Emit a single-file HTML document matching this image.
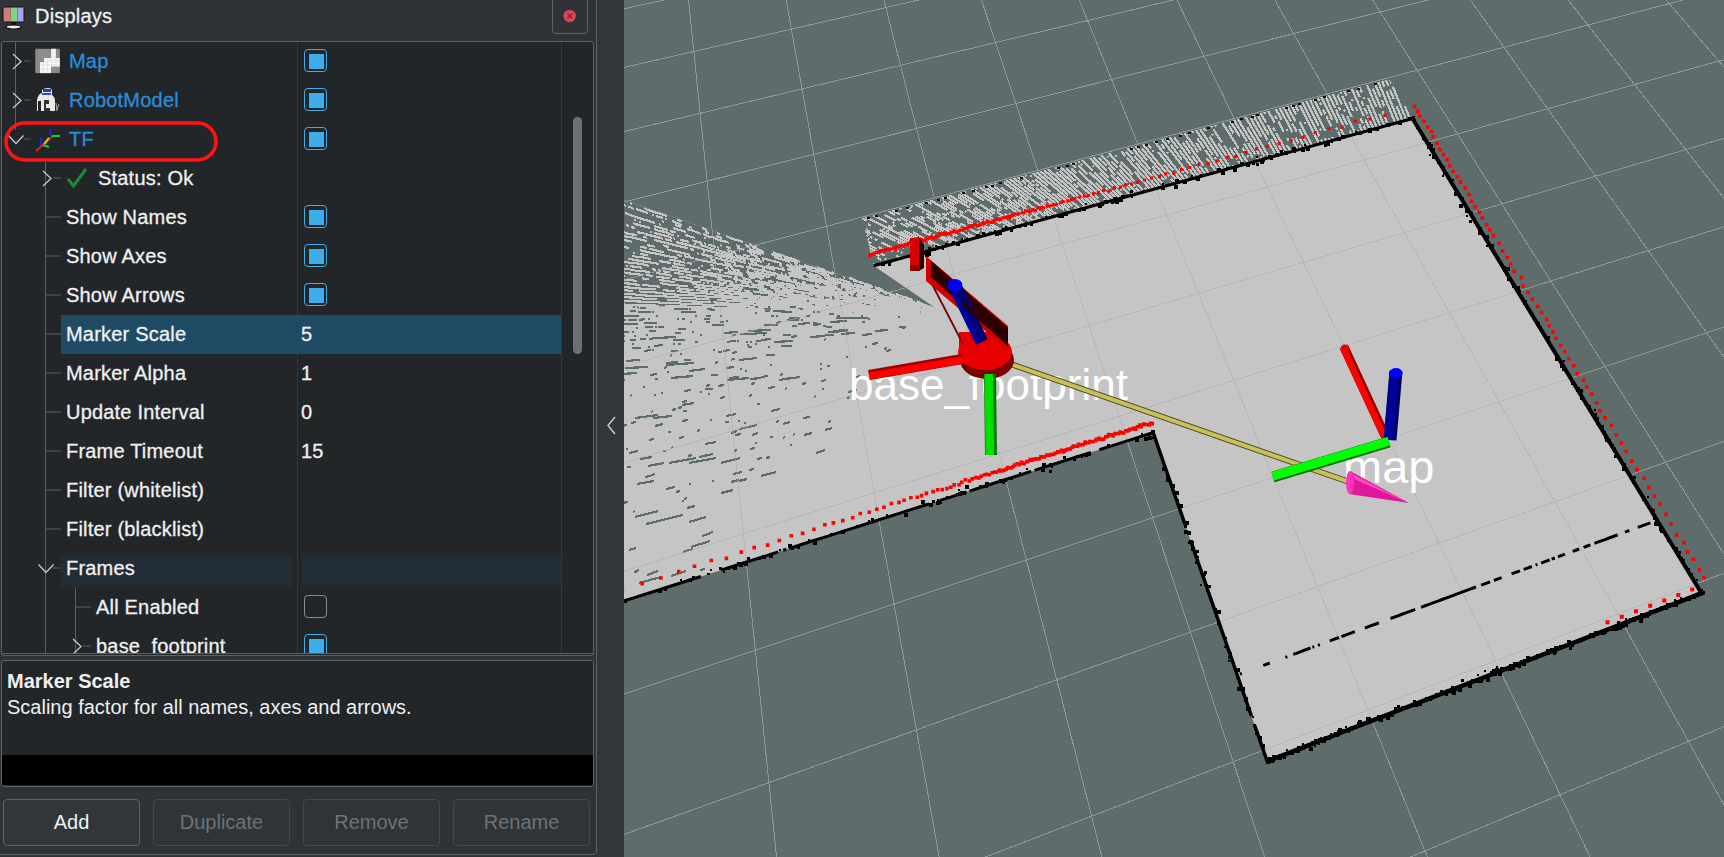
<!DOCTYPE html><html><head><meta charset="utf-8"><style>
html,body{margin:0;padding:0;}
body{width:1724px;height:857px;overflow:hidden;background:#31363b;position:relative;font-family:"Liberation Sans",sans-serif;}
.t{position:absolute;font-size:20px;line-height:39px;color:#eff0f1;white-space:nowrap;letter-spacing:0.2px;-webkit-text-stroke:0.3px currentColor}
#view{position:absolute;left:624px;top:0;width:1100px;height:857px}
</style></head><body>
<div style="position:absolute;left:0;top:0;width:596px;height:857px;background:#2f3338"></div>
<div style="position:absolute;left:1px;top:41px;width:591px;height:613px;background:#232629;border:1px solid #5f6367;border-radius:3px"></div>
<div style="position:absolute;left:297px;top:42px;width:1px;height:612px;background:#33383c"></div>
<div style="position:absolute;left:561px;top:42px;width:1px;height:612px;background:#33383c"></div>
<div style="position:absolute;left:573px;top:117px;width:9px;height:237px;background:#6e6f70;border-radius:5px"></div>
<div style="position:absolute;left:552px;top:-5px;width:34px;height:37px;border:1px solid #5f6367;border-radius:4px"></div>
<svg style="position:absolute;left:560px;top:6px" width="20" height="20"><circle cx="9.7" cy="10" r="6.2" fill="#da4453"/><path d="M7.3,7.6L12.1,12.4M12.1,7.6L7.3,12.4" stroke="#5a3038" stroke-width="1.1"/></svg>

<div style="position:absolute;left:0;top:0;width:596px;height:654px;overflow:hidden">
<svg style="position:absolute;left:0;top:0" width="596" height="857"><line x1="15.5" y1="42" x2="15.5" y2="130" stroke="#5c6064" stroke-width="1"/><line x1="45.5" y1="160" x2="45.5" y2="654" stroke="#5c6064" stroke-width="1"/><line x1="75.5" y1="588" x2="75.5" y2="654" stroke="#5c6064" stroke-width="1"/><line x1="24" y1="61.0" x2="31" y2="61.0" stroke="#5c6064" stroke-width="1"/><path d="M13,54.0 L21,61.5 L13,69.0" fill="none" stroke="#c8c9ca" stroke-width="1.3"/><line x1="24" y1="100.0" x2="31" y2="100.0" stroke="#5c6064" stroke-width="1"/><path d="M13,93.0 L21,100.5 L13,108.0" fill="none" stroke="#c8c9ca" stroke-width="1.3"/><line x1="24" y1="139.0" x2="31" y2="139.0" stroke="#5c6064" stroke-width="1"/><path d="M8.5,135.5 L16,143.5 L23.5,135.5" fill="none" stroke="#c8c9ca" stroke-width="1.3"/><line x1="53" y1="178.0" x2="61" y2="178.0" stroke="#5c6064" stroke-width="1"/><path d="M43,171.0 L51,178.5 L43,186.0" fill="none" stroke="#c8c9ca" stroke-width="1.3"/><line x1="45" y1="217.0" x2="61" y2="217.0" stroke="#5c6064" stroke-width="1"/><line x1="45" y1="256.0" x2="61" y2="256.0" stroke="#5c6064" stroke-width="1"/><line x1="45" y1="295.0" x2="61" y2="295.0" stroke="#5c6064" stroke-width="1"/><line x1="45" y1="334.0" x2="61" y2="334.0" stroke="#5c6064" stroke-width="1"/><line x1="45" y1="373.0" x2="61" y2="373.0" stroke="#5c6064" stroke-width="1"/><line x1="45" y1="412.0" x2="61" y2="412.0" stroke="#5c6064" stroke-width="1"/><line x1="45" y1="451.0" x2="61" y2="451.0" stroke="#5c6064" stroke-width="1"/><line x1="45" y1="490.0" x2="61" y2="490.0" stroke="#5c6064" stroke-width="1"/><line x1="45" y1="529.0" x2="61" y2="529.0" stroke="#5c6064" stroke-width="1"/><line x1="53" y1="568.0" x2="61" y2="568.0" stroke="#5c6064" stroke-width="1"/><path d="M38.5,564.5 L46,572.5 L53.5,564.5" fill="none" stroke="#c8c9ca" stroke-width="1.3"/><line x1="75" y1="607.0" x2="91" y2="607.0" stroke="#5c6064" stroke-width="1"/><line x1="83" y1="646.0" x2="91" y2="646.0" stroke="#5c6064" stroke-width="1"/><path d="M73,639.0 L81,646.5 L73,654.0" fill="none" stroke="#c8c9ca" stroke-width="1.3"/><rect x="2.5" y="6.5" width="22" height="16" rx="2" fill="#111" /><rect x="3.5" y="7.5" width="7" height="14" fill="#d37a7a"/><rect x="10.5" y="7.5" width="7" height="14" fill="#86cf86"/><rect x="17.5" y="7.5" width="6" height="14" fill="#a7a3ee"/><rect x="11" y="22" width="5" height="3" fill="#111"/><ellipse cx="13.5" cy="27" rx="7.5" ry="2" fill="#e8e8e8" stroke="#111" stroke-width="1.2"/><rect x="35.3" y="48.8" width="24.5" height="24.3" fill="#8a8a8a"/><rect x="51" y="48.8" width="5" height="9.5" fill="#f6f6f6"/><rect x="44.1" y="58" width="15.7" height="8.6" fill="#f6f6f6"/><rect x="40" y="62.2" width="11" height="10.9" fill="#f6f6f6"/><path d="M39.4,48.8v24.3M43.5,48.8v24.3M47.5,48.8v24.3M51.6,48.8v24.3M55.7,48.8v24.3M35.3,52.8h24.5M35.3,56.9h24.5M35.3,60.9h24.5M35.3,65.0h24.5M35.3,69.0h24.5" stroke="#a0a0a0" stroke-width="0.6" opacity="0.35"/><path d="M37,111 L37,100 Q38,94 42,93 L42,90 Q44,88 48,88 Q52,88 52,91 L52,95 Q55,97 55,101 L55,111 Z" fill="#e9e9e9"/><rect x="43" y="89" width="8" height="3" fill="#2a3ad0"/><rect x="42" y="93" width="9" height="2" fill="#3347c8"/><path d="M38,101 L41,101 L41,111 L38,111 Z" fill="#222"/><path d="M44,100 L49,100 L49,104 L46,104 L46,108 L50,108 L50,111 L44,111 Z" fill="#333"/><path d="M56,103 L57,111 M59,104 L57,110" stroke="#aaa" stroke-width="1"/><line x1="36" y1="151" x2="53" y2="136" stroke="#e02020" stroke-width="2"/><line x1="44" y1="144" x2="49" y2="138" stroke="#d0c020" stroke-width="2"/><line x1="52" y1="136" x2="60" y2="136" stroke="#20d020" stroke-width="2"/><line x1="43" y1="145" x2="49" y2="147" stroke="#20d020" stroke-width="2"/><line x1="50" y1="129" x2="51" y2="136" stroke="#2020e0" stroke-width="2"/><line x1="41" y1="137" x2="41" y2="145" stroke="#2020e0" stroke-width="2"/><path d="M68,179 L73.5,186 L86,169" fill="none" stroke="#1f8a35" stroke-width="3"/><rect x="6" y="123" width="210" height="37" rx="18.5" fill="none" stroke="#ff1414" stroke-width="3.5"/></svg>
<div class="t" style="left:69px;top:42px;color:#2d8cd9">Map</div><div style="position:absolute;left:304px;top:49px;width:21px;height:21px;border:1.5px solid #3daee9;border-radius:4px"></div><div style="position:absolute;left:309px;top:54px;width:15px;height:15px;background:#3daee9"></div><div class="t" style="left:69px;top:81px;color:#2d8cd9">RobotModel</div><div style="position:absolute;left:304px;top:88px;width:21px;height:21px;border:1.5px solid #3daee9;border-radius:4px"></div><div style="position:absolute;left:309px;top:93px;width:15px;height:15px;background:#3daee9"></div><div class="t" style="left:69px;top:120px;color:#2d8cd9">TF</div><div style="position:absolute;left:304px;top:127px;width:21px;height:21px;border:1.5px solid #3daee9;border-radius:4px"></div><div style="position:absolute;left:309px;top:132px;width:15px;height:15px;background:#3daee9"></div><div class="t" style="left:98px;top:159px;color:#eff0f1">Status: Ok</div><div class="t" style="left:66px;top:198px;color:#eff0f1">Show Names</div><div style="position:absolute;left:304px;top:205px;width:21px;height:21px;border:1.5px solid #3daee9;border-radius:4px"></div><div style="position:absolute;left:309px;top:210px;width:15px;height:15px;background:#3daee9"></div><div class="t" style="left:66px;top:237px;color:#eff0f1">Show Axes</div><div style="position:absolute;left:304px;top:244px;width:21px;height:21px;border:1.5px solid #3daee9;border-radius:4px"></div><div style="position:absolute;left:309px;top:249px;width:15px;height:15px;background:#3daee9"></div><div class="t" style="left:66px;top:276px;color:#eff0f1">Show Arrows</div><div style="position:absolute;left:304px;top:283px;width:21px;height:21px;border:1.5px solid #3daee9;border-radius:4px"></div><div style="position:absolute;left:309px;top:288px;width:15px;height:15px;background:#3daee9"></div><div style="position:absolute;left:61px;top:315px;width:500px;height:39px;background:#1f4c64"></div><div class="t" style="left:66px;top:315px;color:#eff0f1">Marker Scale</div><div class="t" style="left:301px;top:315px">5</div><div class="t" style="left:66px;top:354px;color:#eff0f1">Marker Alpha</div><div class="t" style="left:301px;top:354px">1</div><div class="t" style="left:66px;top:393px;color:#eff0f1">Update Interval</div><div class="t" style="left:301px;top:393px">0</div><div class="t" style="left:66px;top:432px;color:#eff0f1">Frame Timeout</div><div class="t" style="left:301px;top:432px">15</div><div class="t" style="left:66px;top:471px;color:#eff0f1">Filter (whitelist)</div><div class="t" style="left:66px;top:510px;color:#eff0f1">Filter (blacklist)</div><div style="position:absolute;left:61px;top:555px;width:231px;height:32px;background:#232d35"></div><div style="position:absolute;left:302px;top:555px;width:259px;height:32px;background:#232d35"></div><div class="t" style="left:66px;top:549px;color:#eff0f1">Frames</div><div class="t" style="left:96px;top:588px;color:#eff0f1">All Enabled</div><div style="position:absolute;left:304px;top:595px;width:21px;height:21px;border:1.5px solid #8a8d90;border-radius:4px"></div><div class="t" style="left:96px;top:627px;color:#eff0f1">base_footprint</div><div style="position:absolute;left:304px;top:634px;width:21px;height:21px;border:1.5px solid #3daee9;border-radius:4px"></div><div style="position:absolute;left:309px;top:639px;width:15px;height:15px;background:#3daee9"></div></div><div class="t" style="left:35px;top:-3px;font-size:20px">Displays</div>
<div style="position:absolute;left:1px;top:660px;width:591px;height:125px;background:#232629;border:1px solid #5f6367;border-radius:3px;overflow:hidden">
<div style="position:absolute;left:0;top:94px;width:591px;height:30px;background:#000"></div>
</div>
<div style="position:absolute;left:7px;top:662px;font-size:20px;line-height:39px;color:#eff0f1;font-weight:bold">Marker Scale</div>
<div style="position:absolute;left:7px;top:688px;font-size:20px;line-height:39px;color:#eff0f1">Scaling factor for all names, axes and arrows.</div>
<div style="position:absolute;left:3px;top:799px;width:135px;height:45px;border:1px solid #5f6367;border-radius:4px;background:#31363b;color:#eff0f1;font-size:20px;line-height:45px;text-align:center">Add</div>
<div style="position:absolute;left:153px;top:799px;width:135px;height:45px;border:1px solid #45494d;border-radius:4px;background:#2f3438;color:#6e7276;font-size:20px;line-height:45px;text-align:center">Duplicate</div>
<div style="position:absolute;left:303px;top:799px;width:135px;height:45px;border:1px solid #45494d;border-radius:4px;background:#2f3438;color:#6e7276;font-size:20px;line-height:45px;text-align:center">Remove</div>
<div style="position:absolute;left:453px;top:799px;width:135px;height:45px;border:1px solid #45494d;border-radius:4px;background:#2f3438;color:#6e7276;font-size:20px;line-height:45px;text-align:center">Rename</div>
<div style="position:absolute;left:-6px;top:-6px;width:603px;height:861px;border:1px solid #5f6367;border-radius:4px;box-sizing:border-box"></div>
<div style="position:absolute;left:1px;top:653px;width:592px;height:1px;background:#5f6367"></div>
<div style="position:absolute;left:597px;top:0;width:27px;height:857px;background:#31363b"></div>
<svg style="position:absolute;left:596px;top:0" width="28" height="857"><path d="M19,417 L12,425.5 L19,434" fill="none" stroke="#c8c9ca" stroke-width="1.5"/></svg>
<svg id="view" width="1100" height="857" viewBox="0 0 1100 857"><rect x="0" y="0" width="1100" height="857" fill="#5e6d6c"/><path d="M-205.3,-184.6L-754.2,4219.7M-120.9,-199.8L-319.5,3862.9M-38.9,-214.6L62.4,3549.4M41.0,-229.0L400.6,3271.8M118.8,-243.0L702.1,3024.3M194.6,-256.7L972.7,2802.2M268.4,-270.0L1216.8,2601.8M340.4,-283.0L1438.2,2420.1M410.5,-295.6L1639.8,2254.6M479.0,-308.0L1824.3,2103.2M545.8,-320.0L1993.7,1964.2M610.9,-331.8L2149.7,1836.1M674.5,-343.2L2294.0,1717.6M736.7,-354.4L2427.8,1607.8M797.4,-365.4L2552.2,1505.7M856.7,-376.1L2668.1,1410.6M914.6,-386.5L2776.4,1321.7M-472.9,-136.3L914.6,-386.5M-488.9,-90.9L944.7,-358.9M-506.1,-41.8L976.8,-329.5M-524.9,11.5L1010.9,-298.2M-545.3,69.6L1047.3,-264.8M-567.7,133.1L1086.3,-229.0M-592.2,202.9L1128.1,-190.6M-619.3,279.9L1173.0,-149.4M-649.3,365.2L1221.5,-105.0M-682.8,460.4L1273.9,-56.9M-720.4,567.2L1330.7,-4.7M-762.9,687.9L1392.6,52.0M-811.3,825.4L1460.2,114.0M-866.9,983.5L1534.3,182.0M-931.5,1167.2L1616.0,257.0M-1007.5,1383.2L1706.5,340.0M-1098.1,1640.8L1807.2,432.5M-1208.1,1953.4L1920.1,536.1M-1344.4,2340.8L2047.5,652.9M-1517.7,2833.3L2192.3,785.8M-1745.4,3480.4L2358.4,938.1M-2057.9,4368.8L2550.8,1114.7" stroke="#8e9a9a" stroke-width="1" fill="none" shape-rendering="crispEdges"/><polygon points="-315.7,701.4 -257.7,236.5 0.0,200.0 310.0,307.0 249.7,265.8 788.5,118.5 1077.5,593.2 643.1,761.2 529.1,432.6" fill="#c5c5c5"/><clipPath id="mc"><polygon points="-315.7,701.4 -257.7,236.5 0.0,200.0 310.0,307.0 249.7,265.8 788.5,118.5 1077.5,593.2 643.1,761.2 529.1,432.6"/></clipPath><polygon points="298.2,302.9 0.0,200.0 0.0,305.1 296.0,314.7" fill="#5e6d6c"/><path d="M295,302L293,301M289,300L286,299M286,299L284,298M284,298L280,297M280,297L272,294M259,290L257,289M257,289L253,288M253,288L251,287M248,286L246,285M246,285L241,284M241,284L239,283M239,283L235,282M235,282L229,279M229,279L225,278M210,273L208,272M201,270L199,269M199,269L197,269M197,269L193,267M176,262L172,260M172,260L162,257M162,257L158,255M158,255L153,254M153,254L149,252M133,247L130,246M128,245L125,244M119,242L106,238M106,238L102,236M96,234L95,234M95,234L93,233M83,230L78,228M58,221L53,220M43,216L24,210M24,210L22,209M22,209L20,208M8,204L6,203M298,303L293,302M288,300L281,298M275,296L273,295M258,290L253,289M253,289L251,288M249,287L247,287M247,287L241,285M233,282L231,281M231,281L229,281M221,278L219,277M209,274L193,269M193,269L183,266M183,266L181,265M181,265L180,265M174,263L172,262M172,262L160,258M158,257L155,256M155,256L147,254M140,252L136,250M136,250L128,247M126,247L121,245M98,238L92,236M85,233L81,232M68,228L66,227M66,227L65,227M58,225L48,221M43,219L41,219M39,218L32,216M30,215L28,215M24,213L12,209M10,209L8,208M8,208L6,207M6,207L4,207M2,206L0,205M272,296L269,295M269,295L267,294M267,294L258,291M258,291L252,289M242,286L240,286M203,274L196,271M196,271L191,270M188,269L177,266M177,266L175,265M173,264L170,263M166,262L150,257M140,254L138,253M138,253L125,249M116,246L114,246M114,246L112,245M105,243L103,242M103,242L95,240M95,240L88,237M88,237L86,237M86,237L79,234M77,234L75,233M75,233L67,230M67,230L63,229M57,227L51,225M40,222L38,221M298,304L296,304M296,304L294,303M294,303L292,303M274,297L271,296M271,296L268,295M268,295L265,294M263,294L260,293M246,289L240,287M240,287L230,284M227,283L221,281M221,281L215,279M206,276L203,275M203,275L201,275M201,275L197,274M197,274L193,272M193,272L182,269M178,268L172,266M172,266L171,265M168,265L166,264M137,255L135,254M135,254L128,252M128,252L123,251M120,250L118,249M118,249L113,248M82,238L80,238M62,232L52,229M52,229L49,228M37,225L35,224M31,223L15,218M15,218L9,216M9,216L1,213M298,305L289,302M289,302L281,300M281,300L269,296M269,296L265,295M256,292L254,292M252,291L249,290M249,290L240,288M240,288L238,287M238,287L230,285M228,284L226,284M226,284L224,283M215,280L207,278M207,278L205,278M205,278L203,277M177,269L172,268M172,268L170,267M170,267L162,265M158,264L156,263M156,263L154,262M154,262L148,261M148,261L146,260M146,260L141,259M141,259L138,258M134,257L132,256M132,256L126,254M116,251L115,251M107,248L102,247M98,246L96,245M71,238L69,237M69,237L67,237M67,237L65,236M65,236L61,235M52,232L50,232M50,232L46,231M44,230L30,226M17,222L15,222M12,220L10,220M298,305L290,303M290,303L288,302M288,302L278,300M278,300L276,299M276,299L268,297M254,293L251,292M251,292L247,291M247,291L244,290M244,290L242,289M242,289L239,289M239,289L237,288M235,287L222,284M222,284L220,283M220,283L218,283M218,283L205,279M205,279L200,277M197,277L192,275M192,275L190,275M190,275L185,273M182,272L179,272M179,272L169,269M169,269L167,268M167,268L165,268M158,266L155,265M140,261L138,260M136,259L131,258M126,256L123,256M123,256L121,255M121,255L119,255M112,253L103,250M95,248L93,247M92,247L86,245M86,245L84,245M82,244L80,243M78,243L70,241M70,241L68,240M55,236L53,236M50,235L48,235M48,235L46,234M46,234L41,232M41,232L37,231M37,231L35,231M35,231L33,230M33,230L30,229M26,228L15,225M15,225L11,224M11,224L9,223M0,221L0,221M297,306L289,303M287,303L285,302M278,300L273,299M273,299L268,298M236,289L234,288M225,286L222,285M222,285L220,284M220,284L216,283M216,283L214,283M209,282L206,281M206,281L203,280M198,279L197,278M197,278L195,278M193,277L177,273M177,273L172,271M172,271L169,271M169,271L167,270M167,270L163,269M160,268L158,268M146,264L144,264M138,262L135,261M135,261L133,261M133,261L131,260M131,260L127,259M127,259L125,259M125,259L111,255M109,254L107,254M107,254L96,251M96,251L94,250M94,250L92,250M90,249L88,249M88,249L80,246M80,246L76,245M72,244L70,244M65,242L62,241M62,241L56,240M51,239L49,238M48,238L43,236M43,236L30,233M28,232L26,232M11,228L7,227M5,226L2,225M0,225L0,225M297,306L293,305M287,303L281,302M281,302L279,301M279,301L272,299M272,299L262,297M260,296L259,296M259,296L257,295M257,295L252,294M252,294L250,294M250,294L245,292M245,292L243,292M243,292L233,289M233,289L231,289M231,289L218,285M214,284L210,283M210,283L205,282M205,282L194,279M194,279L183,276M179,275L174,274M174,274L172,273M172,273L167,272M161,270L152,268M152,268L142,266M133,263L131,263M131,263L129,262M129,262L126,261M122,260L113,258M113,258L112,258M112,258L110,257M110,257L102,255M102,255L96,254M96,254L95,253M95,253L85,251M85,251L78,249M78,249L76,248M76,248L52,242M48,241L41,239M39,239L37,238M37,238L21,234M21,234L19,233M19,233L17,233M17,233L13,232M297,306L295,306M295,306L288,304M288,304L285,303M283,303L278,301M278,301L275,301M275,301L273,300M273,300L268,299M264,298L260,297M257,296L254,296M252,295L250,295M250,295L241,292M241,292L235,291M235,291L233,290M233,290L230,290M228,289L223,288M223,288L217,286M211,285L209,284M207,284L205,283M205,283L190,280M190,280L188,279M188,279L185,278M179,277L177,276M177,276L168,274M168,274L164,273M151,270L137,266M137,266L126,264M126,264L124,263M122,263L101,257M101,257L99,257M99,257L95,256M95,256L93,255M93,255L91,255M81,252L79,252M70,250L66,249M64,248L58,247M58,247L35,241M35,241L30,240M23,238L21,237M21,237L19,237M13,235L5,234M5,234L1,233M1,233L0,232M297,307L293,306M289,305L282,303M282,303L279,302M279,302L269,300M269,300L265,299M265,299L258,297M258,297L256,297M256,297L251,296M251,296L243,294M241,293L231,291M231,291L229,291M229,291L227,290M225,290L221,289M219,288L217,288M213,287L210,286M210,286L204,285M204,285L199,283M197,283L191,281M191,281L189,281M189,281L187,281M187,281L185,280M185,280L177,278M177,278L165,275M163,275L161,274M159,274L157,273M141,269L138,269M127,266L125,266M112,263L106,261M106,261L95,259M95,259L93,258M93,258L91,258M89,257L77,254M75,254L73,253M45,247L41,246M41,246L39,245M23,241L6,237M6,237L3,237M3,237L0,236M297,307L295,307M286,305L278,303M278,303L276,302M276,302L274,302M274,302L267,300M267,300L264,300M264,300L258,298M258,298L256,298M256,298L251,297M251,297L249,296M249,296L246,295M246,295L244,295M244,295L236,293M236,293L234,293M232,292L230,292M230,292L228,292M228,292L226,291M215,289L213,288M213,288L208,287M193,283L191,283M166,277L163,277M163,277L161,276M161,276L155,275M155,275L153,274M153,274L149,273M149,273L122,267M120,267L109,265M107,264L105,264M105,264L100,262M92,261L86,259M66,255L55,252M55,252L49,251M49,251L47,250M47,250L45,250M45,250L43,249M31,247L29,246M29,246L27,246M27,246L23,245M8,242L6,241M6,241L4,241M4,241L1,240M1,240L0,240M293,307L285,305M285,305L282,304M282,304L280,304M280,304L278,303M278,303L258,299M258,299L256,299M256,299L254,298M254,298L249,297M249,297L247,297M247,297L243,296M243,296L241,295M239,295L236,294M236,294L233,294M228,293L226,292M226,292L224,292M224,292L222,291M218,290L203,287M203,287L200,287M200,287L198,286M196,286L194,285M194,285L191,285M182,283L180,282M180,282L178,282M173,281L169,280M167,280L155,277M155,277L153,276M151,276L149,275M149,275L147,275M147,275L132,272M132,272L130,271M125,270L123,270M109,267L105,266M105,266L96,264M96,264L94,264M94,264L92,263M92,263L90,263M90,263L88,262M88,262L86,262M86,262L71,259M70,258L63,257M63,257L60,256M58,256L53,255M40,252L38,252M38,252L27,249M27,249L25,249M23,248L18,247M18,247L16,247M297,308L295,308M293,307L291,307M291,307L289,306M289,306L287,306M284,305L281,305M281,305L273,303M273,303L271,303M271,303L267,302M267,302L264,301M264,301L259,300M259,300L250,298M250,298L245,297M245,297L243,297M243,297L241,297M239,296L237,296M237,296L232,295M230,294L223,293M223,293L221,292M221,292L217,292M217,292L215,291M215,291L213,291M211,290L209,290M209,290L200,288M200,288L195,287M195,287L193,287M193,287L191,286M191,286L178,284M178,284L152,278M146,277L139,276M139,276L136,275M136,275L132,274M132,274L126,273M126,273L122,272M116,271L112,270M112,270L107,269M105,269L103,268M103,268L101,268M90,266L88,265M88,265L86,265M61,260L59,259M54,258L48,257M48,257L29,253M29,253L27,253M27,253L16,250M5,248L0,247M0,247L0,247M297,308L294,308M294,308L291,307M291,307L289,307M289,307L279,305M279,305L277,304M277,304L275,304M275,304L268,303M268,303L266,302M266,302L258,301M258,301L256,300M247,299L244,298M244,298L241,298M239,297L237,297M237,297L234,296M229,295L227,295M221,294L219,293M217,293L215,292M215,292L211,292M211,292L197,289M197,289L194,288M190,288L177,285M174,285L171,284M140,278L138,278M138,278L126,275M126,275L124,275M119,274L116,273M116,273L114,273M114,273L104,271M99,270L97,270M97,270L87,268M79,266L77,266M68,264L65,263M65,263L63,263M61,263L59,262M59,262L53,261M53,261L49,260M49,260L45,260M24,255L21,255M21,255L18,254M18,254L16,254M11,253L9,253M297,309L293,308M289,307L286,307M286,307L281,306M281,306L277,305M277,305L272,304M272,304L269,304M269,304L267,303M265,303L260,302M260,302L254,301M252,301L247,300M247,300L233,297M224,295L207,292M207,292L202,291M202,291L200,291M200,291L198,291M198,291L178,287M178,287L173,286M171,286L169,285M169,285L163,284M163,284L155,283M155,283L152,282M150,282L144,281M138,280L136,279M131,278L128,278M128,278L125,277M119,276L109,274M109,274L102,273M102,273L100,273M97,272L95,272M87,270L85,270M85,270L83,270M76,268L74,268M61,266L59,265M59,265L52,264M52,264L49,263M47,263L35,261M27,259L22,258M22,258L17,257M17,257L12,257M12,257L10,256M10,256L8,256M284,307L280,306M280,306L271,305M271,305L257,302M257,302L252,301M250,301L248,301M248,301L246,300M246,300L240,299M240,299L235,299M235,299L230,298M230,298L228,297M228,297L221,296M221,296L219,296M217,295L212,295M212,295L206,294M206,294L204,293M204,293L202,293M202,293L197,292M197,292L193,291M193,291L183,290M183,290L162,286M160,286L157,285M157,285L155,285M155,285L152,284M152,284L150,284M146,283L144,283M144,283L133,281M133,281L131,281M127,280L122,279M122,279L118,278M114,278L110,277M108,277L101,276M101,276L92,274M92,274L85,273M85,273L76,271M74,271L72,270M72,270L67,270M65,269L63,269M63,269L61,269M61,269L59,268M59,268L57,268M57,268L55,268M55,268L52,267M52,267L48,266M35,264L24,262M24,262L22,262M22,262L6,259M6,259L4,259M297,310L295,309M295,309L288,308M288,308L284,308M284,308L282,307M282,307L278,307M278,307L274,306M270,305L267,305M267,305L257,303M257,303L255,303M255,303L253,303M253,303L251,302M251,302L249,302M249,302L243,301M243,301L241,301M241,301L238,300M238,300L220,297M220,297L216,297M216,297L211,296M211,296L209,295M209,295L207,295M207,295L205,295M205,295L203,294M203,294L199,294M199,294L197,293M197,293L185,292M170,289L166,289M164,288L156,287M156,287L153,286M153,286L147,285M147,285L139,284M139,284L136,284M136,284L134,283M128,282L124,282M124,282L109,279M98,278L90,276M90,276L84,275M84,275L76,274M68,273L66,272M66,272L64,272M64,272L60,271M60,271L58,271M58,271L43,269M43,269L40,268M40,268L38,268M25,266L18,264M18,264L0,262M296,310L294,310M277,307L275,307M266,305L264,305M264,305L256,304M256,304L253,303M253,303L250,303M250,303L248,303M248,303L232,300M232,300L225,299M225,299L218,298M218,298L215,298M215,298L210,297M208,297L200,295M200,295L198,295M198,295L188,294M188,294L170,291M170,291L165,290M165,290L162,290M162,290L160,289M160,289L158,289M156,289L154,289M154,289L146,287M140,286L138,286M138,286L131,285M131,285L127,284M125,284L121,283M121,283L119,283M119,283L117,283M113,282L111,282M109,282L98,280M98,280L93,279M80,277L75,277M75,277L73,276M73,276L69,276M69,276L64,275M64,275L62,275M60,274L50,273M46,272L42,272M42,272L39,271M37,271L34,270M32,270L28,269M18,268L15,267M15,267L12,267M12,267L6,266M4,266L2,266M296,310L286,309M280,308L258,305M258,305L256,305M256,305L254,304M254,304L247,304M247,304L245,303M245,303L243,303M243,303L241,303M241,303L239,302M239,302L230,301M230,301L228,301M228,301L224,300M224,300L221,300M221,300L219,300M215,299L213,299M213,299L211,298M208,298L205,298M200,297L198,297M198,297L195,296M195,296L193,296M193,296L191,296M189,295L186,295M181,294L177,294M169,293L160,291M160,291L156,291M156,291L152,290M152,290L150,290M143,289L141,289M141,289L138,288M138,288L136,288M136,288L134,288M134,288L132,287M132,287L129,287M129,287L114,285M114,285L105,284M103,283L98,283M98,283L87,281M87,281L78,280M78,280L76,280M69,279L60,277M60,277L55,277M48,276L45,275M45,275L32,273M26,272L17,271M17,271L12,271M12,271L10,270M10,270L7,270M7,270L5,269M5,269L2,269M2,269L0,269M296,311L268,307M237,303L233,303M233,303L230,302M230,302L228,302M228,302L221,301M221,301L219,301M219,301L217,301M217,301L215,300M215,300L212,300M212,300L210,300M204,299L202,299M200,298L193,298M186,297L184,296M184,296L171,295M171,295L168,294M168,294L151,292M149,292L137,290M137,290L135,290M119,288L112,287M112,287L110,287M110,287L108,286M108,286L104,286M104,286L102,286M100,285L98,285M98,285L95,285M89,284L87,284M85,283L83,283M81,283L79,283M77,282L74,282M74,282L71,282M71,282L48,279M46,278L41,278M41,278L37,277M37,277L32,277M29,276L22,275M19,275L2,273M2,273L0,272M296,311L294,311M294,311L292,311M292,311L285,310M285,310L283,310M283,310L281,309M281,309L279,309M279,309L271,308M271,308L262,307M262,307L252,306M242,305L240,305M240,305L234,304M228,303L223,303M223,303L221,302M217,302L215,302M215,302L213,301M213,301L203,300M203,300L201,300M201,300L199,300M199,300L187,298M187,298L185,298M185,298L183,298M183,298L180,297M180,297L173,297M173,297L171,296M171,296L168,296M168,296L166,296M166,296L164,296M164,296L156,295M156,295L148,294M148,294L146,293M146,293L141,293M141,293L139,293M139,293L135,292M135,292L133,292M133,292L131,292M131,292L129,291M126,291L122,291M122,291L120,290M118,290L115,290M115,290L113,289M113,289L111,289M111,289L109,289M109,289L105,289M105,289L103,288M103,288L100,288M100,288L98,288M98,288L93,287M93,287L90,287M90,287L87,286M87,286L85,286M85,286L83,286M83,286L75,285M75,285L70,284M70,284L68,284M51,282L49,282M49,282L47,282M47,282L45,281M45,281L43,281M43,281L35,280M25,279L23,279M23,279L21,279M21,279L18,278M1,276L0,276M294,311L292,311M292,311L288,311M288,311L286,311M286,311L284,310M284,310L280,310M280,310L278,310M278,310L274,309M274,309L272,309M272,309L268,309M268,309L253,307M253,307L247,306M247,306L234,305M234,305L227,304M227,304L225,304M225,304L223,304M223,304L216,303M216,303L214,303M214,303L209,302M209,302L199,301M199,301L197,301M197,301L193,300M193,300L169,298M169,298L167,298M167,298L163,297M155,296L146,295M146,295L144,295M129,294L127,293M127,293L125,293M125,293L123,293M123,293L121,293M121,293L111,292M111,292L109,291M109,291L106,291M106,291L87,289M87,289L83,289M83,289L79,288M79,288L77,288M77,288L73,287M73,287L70,287M64,286L61,286M61,286L56,286M56,286L53,285M53,285L47,285M47,285L36,283M13,281L6,280M6,280L1,280M1,280L0,280M296,312L294,312M294,312L291,312M291,312L289,311M289,311L282,311M282,311L275,310M275,310L272,310M272,310L270,310M270,310L268,309M268,309L264,309M264,309L261,309M261,309L257,308M257,308L255,308M255,308L252,308M252,308L250,308M250,308L247,307M247,307L245,307M245,307L238,306M238,306L224,305M224,305L214,304M214,304L212,304M212,304L196,302M196,302L185,301M183,301L180,301M180,301L177,300M177,300L175,300M175,300L163,299M163,299L153,298M153,298L151,298M151,298L150,298M150,298L147,297M147,297L139,297M139,297L134,296M134,296L119,295M119,295L113,294M113,294L108,294M108,294L104,293M104,293L102,293M102,293L88,292M88,292L86,292M84,291L79,291M79,291L77,291M77,291L75,290M75,290L72,290M70,290L57,289M57,289L54,288M54,288L52,288M36,287L32,286M32,286L27,286M27,286L22,285M22,285L20,285M20,285L18,285M16,285L0,283M296,313L293,312M293,312L290,312M290,312L276,311M276,311L271,310M271,310L269,310M269,310L263,310M263,310L258,309M258,309L256,309M256,309L254,309M254,309L250,309M250,309L248,308M248,308L246,308M246,308L244,308M244,308L237,307M237,307L221,306M216,306L209,305M209,305L202,304M202,304L199,304M199,304L189,303M189,303L187,303M187,303L163,301M163,301L161,301M161,301L158,301M158,301L151,300M151,300L148,300M148,300L146,299M146,299L141,299M141,299L139,299M139,299L137,299M137,299L132,298M132,298L128,298M128,298L122,297M122,297L112,297M112,297L95,295M95,295L91,295M91,295L89,294M89,294L77,293M77,293L75,293M75,293L72,293M72,293L69,293M69,293L53,291M51,291L45,291M45,291L41,290M41,290L39,290M32,289L25,289M25,289L23,289M23,289L21,289M21,289L0,287M296,313L286,312M286,312L281,312M279,312L275,311M275,311L273,311M273,311L268,311M268,311L261,310M261,310L257,310M257,310L255,310M253,310L251,310M251,310L249,309M249,309L245,309M245,309L238,309M238,309L224,307M224,307L217,307M217,307L215,307M215,307L213,307M213,307L211,306M211,306L209,306M209,306L207,306M207,306L204,306M202,306L198,305M198,305L191,305M188,305L186,304M186,304L177,304M177,304L171,303M171,303L169,303M169,303L167,303M167,303L162,303M162,303L160,303M160,303L158,302M158,302L155,302M155,302L151,302M151,302L143,301M143,301L135,301M135,301L129,300M129,300L127,300M127,300L122,300M122,300L114,299M114,299L111,299M111,299L107,298M107,298L105,298M105,298L92,297M92,297L90,297M90,297L88,297M88,297L86,297M86,297L78,296M78,296L76,296M76,296L74,296M74,296L67,295M67,295L65,295M65,295L57,295M57,295L45,294M45,294L43,294M43,294L36,293M36,293L28,292M28,292L17,292M17,292L15,291M9,291L5,291M5,291L2,290M2,290L0,290M294,313L282,312M282,312L276,312M276,312L274,312M274,312L272,312M272,312L261,311M261,311L259,311M259,311L256,311M256,311L254,311M254,311L251,310M245,310L242,310M242,310L239,310M239,310L233,309M233,309L229,309M229,309L226,309M226,309L220,308M218,308L206,307M206,307L200,307M200,307L198,307M198,307L195,307M195,307L193,307M193,307L185,306M185,306L166,305M166,305L162,305M162,305L160,304M160,304L158,304M158,304L149,304M149,304L147,304M147,304L145,303M145,303L142,303M142,303L137,303M137,303L135,303M135,303L133,303M133,303L131,302M131,302L128,302M128,302L126,302M126,302L118,302M118,302L115,301M115,301L104,301M104,301L101,300M101,300L95,300M95,300L93,300M86,300L84,299M84,299L75,299M75,299L70,298M70,298L68,298M68,298L58,298M58,298L56,298M56,298L54,297M54,297L52,297M52,297L50,297M50,297L46,297M46,297L38,296M38,296L26,296M26,296L18,295M18,295L16,295M16,295L7,294M7,294L0,294M296,314L294,314M294,314L288,313M288,313L286,313M286,313L280,313M280,313L258,312M258,312L248,311M248,311L245,311M245,311L243,311M243,311L241,311M241,311L239,311M239,311L237,311M237,311L229,310M229,310L215,309M215,309L209,309M209,309L207,309M207,309L197,308M197,308L192,308M192,308L179,307M179,307L177,307M177,307L175,307M175,307L172,307M166,307L155,306M155,306L151,306M151,306L147,306M147,306L145,305M145,305L143,305M143,305L137,305M137,305L135,305M135,305L133,305M133,305L126,304M126,304L111,304M111,304L95,303M95,303L89,302M87,302L85,302M85,302L83,302M83,302L81,302M81,302L60,301M60,301L58,301M58,301L54,300M54,300L43,300M33,299L31,299M31,299L29,299M29,299L25,299M25,299L22,299M22,299L16,298M16,298L12,298M12,298L1,297M1,297L0,297M296,314L294,314M294,314L280,313M280,313L270,313M270,313L268,313M268,313L265,313M265,313L252,312M252,312L242,312M242,312L240,312M240,312L238,312M238,312L236,311M234,311L229,311M229,311L227,311M227,311L225,311M225,311L223,311M223,311L221,311M221,311L216,311M216,311L210,310M210,310L208,310M208,310L205,310M205,310L195,310M195,310L193,310M193,310L190,309M190,309L187,309M187,309L183,309M183,309L181,309M181,309L179,309M174,309L152,308M152,308L146,307M144,307L142,307M142,307L140,307M140,307L138,307M138,307L136,307M136,307L134,307M131,307L129,307M129,307L127,307M127,307L123,306M123,306L117,306M117,306L113,306M113,306L105,306M105,306L102,305M102,305L87,305M87,305L84,305M84,305L82,305M82,305L75,304M75,304L71,304M71,304L69,304M69,304L67,304M67,304L60,304M60,304L58,304M58,304L55,303M55,303L53,303M53,303L51,303M51,303L49,303M49,303L40,303M40,303L38,303M38,303L32,302M32,302L30,302M30,302L26,302M26,302L23,302M23,302L7,301M7,301L0,301M296,315L293,315M293,315L288,314M288,314L286,314M286,314L284,314M284,314L281,314M281,314L279,314M279,314L277,314M277,314L275,314M275,314L273,314M273,314L260,313M260,313L255,313M255,313L253,313M253,313L236,313M236,313L234,312M234,312L232,312M232,312L230,312M228,312L226,312M226,312L216,312M216,312L207,312M207,312L204,311M204,311L202,311M202,311L178,311M178,311L172,310M172,310L169,310M169,310L167,310M167,310L163,310M163,310L161,310M161,310L155,310M155,310L152,310M152,310L149,310M149,310L147,309M140,309L138,309M138,309L127,309M127,309L125,309M125,309L118,308M118,308L114,308M114,308L110,308M110,308L108,308M108,308L106,308M106,308L101,308M101,308L98,308M98,308L96,308M96,308L94,308M94,308L92,308M92,308L87,307M87,307L83,307M83,307L77,307M77,307L75,307M75,307L72,307M72,307L70,307M70,307L51,306M51,306L45,306M45,306L43,306M43,306L41,306M35,306L33,306M33,306L31,305M31,305L25,305M25,305L23,305M23,305L21,305M21,305L19,305M19,305L17,305M17,305L14,305M14,305L10,305M10,305L8,305M8,305L6,305M6,305L2,305M2,305L0,304" stroke="#c5c5c5" stroke-width="2.2" fill="none" shape-rendering="crispEdges"/><clipPath id="fc"><polygon points="0.0,200.0 310.0,307.0 376.0,350.0 376.0,600.0 0.0,600.0"/></clipPath><path d="M196,312L193,312M191,312L189,312M168,312L149,311M146,311L141,311M91,310L83,309M67,309L65,309M64,309L50,309M22,308L16,308M15,308L13,307M11,307L9,307M210,314L205,314M133,313L131,313M72,312L66,312M66,312L57,312M30,312L28,312M27,312L14,312M12,311L10,311M10,311L6,311M239,316L237,316M216,316L213,316M186,316L182,316M154,316L152,316M150,316L147,316M98,316L96,316M87,316L82,316M73,316L71,316M34,316L32,316M15,316L-23,316M276,317L274,317M176,318L165,318M86,319L84,319M84,319L80,319M61,319L58,319M55,319L53,319M26,319L24,319M21,319L15,320M13,320L4,320M2,320L-0,320M244,318L212,318M179,320L177,320M175,320L163,320M104,321L102,321M100,322L96,322M86,322L82,322M68,322L66,322M33,323L20,323M14,324L-0,324M246,319L244,319M157,322L152,323M100,325L88,325M40,327L34,327M33,327L31,327M29,327L27,327M27,327L24,327M24,327L21,327M14,328L12,328M223,321L206,322M193,323L191,323M191,323L189,323M186,323L174,324M154,325L140,325M62,329L54,329M32,331L25,331M10,332L8,332M5,332L-14,332M241,322L238,322M197,324L189,325M173,326L168,326M70,332L68,332M57,333L51,333M24,335L22,335M12,336L10,336M1,336L-4,337M202,326L199,326M147,330L124,331M114,332L100,333M78,335L76,335M52,337L32,338M32,338L25,339M22,339L16,339M12,340L6,340M1,341L-1,341M208,327L202,327M143,333L136,333M136,333L128,334M128,334L116,334M112,335L110,335M110,335L108,336M61,340L59,340M59,340L49,340M10,344L8,344M141,335L139,335M74,342L71,342M57,344L54,344M51,344L49,344M39,345L30,346M26,347L24,347M17,348L12,348M12,348L8,348M167,335L165,335M165,335L159,335M115,341L113,341M112,341L108,341M108,341L106,341M106,342L103,342M30,350L28,350M27,350L20,351M224,330L209,331M173,336L167,337M147,339L137,340M137,341L132,341M128,342L126,342M124,342L122,342M54,351L47,351M223,331L204,332M133,344L131,344M125,345L123,345M91,350L89,350M58,354L56,354M48,355L46,356M16,360L14,360M14,360L2,361M210,335L201,335M201,336L186,337M169,341L150,342M128,347L124,347M106,350L99,351M98,352L96,352M96,352L94,352M231,333L217,334M146,347L144,347M113,352L108,353M67,360L60,360M54,362L42,363M24,367L1,368M202,339L200,340M168,346L157,346M70,363L42,365M43,367L40,368M13,373L-3,374M279,327L275,327M264,330L251,331M111,359L109,359M109,359L107,360M94,362L91,363M45,372L43,372M33,374L26,375M1,380L-1,380M282,327L278,328M248,334L238,335M151,355L142,355M133,358L115,360M81,369L65,371M34,379L31,379M110,367L102,368M69,376L47,378M21,387L19,387M118,369L116,369M94,375L87,375M8,395L6,396M148,365L146,365M123,371L121,371M39,393L37,393M32,395L30,395M115,377L105,378M105,380L103,380M86,385L82,386M67,390L60,391M125,378L103,380M100,385L94,386M89,389L81,389M78,392L76,392M144,376L137,377M137,378L126,379M86,394L84,394M63,401L58,402M29,411L27,412M254,343L248,344M243,347L241,347M159,374L156,375M131,383L127,384M70,403L58,405M58,407L54,408M52,409L48,410M34,415L11,418M12,422L7,423M3,425L-3,426M198,364L196,364M101,397L96,398M63,411L59,411M48,416L29,418M224,357L222,357M166,378L162,379M39,424L31,426M206,366L203,366M198,369L196,369M176,377L155,380M151,387L144,388M128,395L125,396M64,420L58,421M47,432L44,432M30,439L25,440M4,449L2,449M163,388L161,389M88,420L86,420M14,451L5,453M263,348L260,349M182,383L178,384M136,404L133,404M112,414L102,416M76,430L73,431M60,437L55,438M105,422L101,422M49,447L47,448M42,451L39,451M28,457L16,459M7,467L3,467M202,380L200,380M200,381L197,381M116,421L114,421M267,350L262,351M122,423L120,423M40,463L24,466M156,409L147,411M113,431L107,433M92,442L81,444M68,455L64,456M31,474L28,475M28,475L26,476M26,476L21,477M200,389L198,389M133,425L115,429M117,434L111,435M72,458L45,463M30,481L13,484M192,396L190,397M89,454L75,457M4,502L-8,504M155,421L152,422M134,433L128,435M92,458L65,463M236,376L229,378M113,450L110,451M51,487L42,489M11,511L9,512M166,422L159,424M133,443L131,443M67,484L65,484M56,491L52,492M149,437L146,437M131,448L126,449M116,458L97,463M34,511L11,517M186,417L179,418M90,481L88,481M63,498L60,499M60,501L58,501M161,437L159,438M43,519L22,524M233,390L224,392M171,434L169,435M138,458L133,459M118,472L109,474M71,506L63,508M59,515L42,519M12,548L5,550M226,397L223,398M146,457L142,458M130,469L125,470M115,480L107,482M168,445L166,445M123,479L115,481M109,490L97,493M188,433L180,435M82,517L65,522M15,570L13,570M14,571L10,572M207,421L204,422M152,472L137,476M34,571L23,575M208,428L201,430M89,532L87,532M87,533L78,536M69,549L59,552M37,577L15,583M86,541L67,547M13,607L11,608M62,571L47,576M201,450L192,453M81,569L76,570M37,613L33,614" stroke="#5e6d6c" stroke-width="2.2" fill="none" clip-path="url(#fc)" shape-rendering="crispEdges"/><path d="M-205.3,-184.6L-754.2,4219.7M-120.9,-199.8L-319.5,3862.9M-38.9,-214.6L62.4,3549.4M41.0,-229.0L400.6,3271.8M118.8,-243.0L702.1,3024.3M194.6,-256.7L972.7,2802.2M268.4,-270.0L1216.8,2601.8M340.4,-283.0L1438.2,2420.1M410.5,-295.6L1639.8,2254.6M479.0,-308.0L1824.3,2103.2M545.8,-320.0L1993.7,1964.2M610.9,-331.8L2149.7,1836.1M674.5,-343.2L2294.0,1717.6M736.7,-354.4L2427.8,1607.8M797.4,-365.4L2552.2,1505.7M856.7,-376.1L2668.1,1410.6M914.6,-386.5L2776.4,1321.7M-472.9,-136.3L914.6,-386.5M-488.9,-90.9L944.7,-358.9M-506.1,-41.8L976.8,-329.5M-524.9,11.5L1010.9,-298.2M-545.3,69.6L1047.3,-264.8M-567.7,133.1L1086.3,-229.0M-592.2,202.9L1128.1,-190.6M-619.3,279.9L1173.0,-149.4M-649.3,365.2L1221.5,-105.0M-682.8,460.4L1273.9,-56.9M-720.4,567.2L1330.7,-4.7M-762.9,687.9L1392.6,52.0M-811.3,825.4L1460.2,114.0M-866.9,983.5L1534.3,182.0M-931.5,1167.2L1616.0,257.0M-1007.5,1383.2L1706.5,340.0M-1098.1,1640.8L1807.2,432.5M-1208.1,1953.4L1920.1,536.1M-1344.4,2340.8L2047.5,652.9M-1517.7,2833.3L2192.3,785.8M-1745.4,3480.4L2358.4,938.1M-2057.9,4368.8L2550.8,1114.7" stroke="#acacac" stroke-width="1" fill="none" clip-path="url(#mc)" opacity="0.6" shape-rendering="crispEdges"/><polygon points="238.0,218.0 765.0,79.0 776.0,95.0 788.5,118.5 249.7,265.8" fill="#5e6d6c"/><clipPath id="sc"><polygon points="238.0,218.0 765.0,79.0 776.0,95.0 788.5,118.5 249.7,265.8"/></clipPath><path d="M87.7,265.1L95.4,268.9M98.5,270.5L101.3,271.9M101.3,271.9L104.3,273.3M104.3,273.3L117.1,279.8M128.4,285.4L135.4,288.9M157.5,299.9L165.1,303.7M185.0,313.7L192.6,317.5M198.3,320.3L203.0,322.7M203.0,322.7L203.2,322.8M93.5,265.1L97.6,267.1M112.6,274.6L119.4,278.0M121.7,279.2L123.5,280.1M123.5,280.1L125.3,281.0M138.4,287.5L140.2,288.4M140.2,288.4L143.7,290.2M146.1,291.3L155.1,295.8M155.1,295.8L165.6,301.1M165.6,301.1L167.4,302.0M167.4,302.0L172.7,304.7M172.7,304.7L174.5,305.6M174.5,305.6L182.3,309.5M120.3,275.5L123.4,277.1M142.1,286.4L146.7,288.7M156.6,293.7L167.3,299.0M181.5,306.2L186.9,308.8M194.3,312.5L196.1,313.4M204.7,317.7L206.5,318.6M206.5,318.6L210.8,320.8M102.0,263.5L103.8,264.4M103.8,264.4L105.6,265.3M105.6,265.3L110.0,267.5M110.0,267.5L122.1,273.6M122.1,273.6L138.3,281.6M138.3,281.6L140.1,282.5M140.1,282.5L143.3,284.2M143.3,284.2L145.8,285.4M145.8,285.4L147.6,286.3M147.6,286.3L161.2,293.1M166.7,295.8L181.2,303.1M201.6,313.3L214.6,319.8M98.6,258.9L103.5,261.4M115.3,267.2L131.5,275.4M136.9,278.0L144.1,281.7M144.1,281.7L145.9,282.6M147.7,283.4L149.7,284.5M155.1,287.1L157.1,288.2M189.9,304.5L197.7,308.4M207.3,313.2L217.7,318.4M217.7,318.4L218.4,318.8M131.6,272.5L133.4,273.4M133.4,273.4L137.2,275.3M155.1,284.2L160.0,286.7M170.8,292.1L172.5,293.0M172.5,293.0L174.3,293.9M182.6,298.0L184.4,298.9M184.4,298.9L206.9,310.1M100.8,254.2L102.6,255.1M122.8,265.2L124.5,266.1M128.8,268.2L136.7,272.2M136.7,272.2L138.5,273.1M138.5,273.1L140.3,273.9M144.5,276.0L147.3,277.5M153.0,280.3L160.5,284.0M172.9,290.2L176.6,292.1M182.2,294.9L184.6,296.1M186.4,297.0L194.7,301.2M194.7,301.2L203.3,305.4M113.8,257.8L115.6,258.7M149.3,275.5L151.1,276.4M152.9,277.3L154.7,278.2M165.4,283.6L167.2,284.5M190.2,296.0L192.0,296.9M213.8,307.8L221.3,311.5M110.5,253.2L120.4,258.2M148.2,272.1L157.1,276.5M157.1,276.5L165.2,280.6M170.9,283.4L178.4,287.2M214.9,305.4L225.7,310.8M118.3,254.2L120.1,255.1M120.1,255.1L122.7,256.4M122.7,256.4L124.5,257.3M142.1,266.1L151.2,270.7M168.4,279.3L180.9,285.5M183.5,286.8L190.8,290.5M198.9,294.5L200.7,295.4M204.4,297.3L208.8,299.5M208.8,299.5L210.7,300.4M212.5,301.3L214.3,302.2M214.3,302.2L218.9,304.5M220.7,305.4L225.1,307.6M228.9,309.5L237.4,313.8M116.0,250.2L131.8,258.1M131.8,258.1L141.1,262.7M141.1,262.7L144.3,264.3M144.3,264.3L149.1,266.7M155.7,270.0L157.5,270.9M175.3,279.8L177.1,280.7M193.6,289.0L195.4,289.9M202.7,293.5L206.2,295.3M206.2,295.3L208.9,296.6M208.9,296.6L213.4,298.9M125.4,252.0L127.2,252.9M142.1,260.3L159.9,269.2M171.5,275.0L176.6,277.6M178.4,278.4L184.2,281.4M188.8,283.6L190.5,284.5M237.0,307.8L238.8,308.7M123.6,248.2L129.9,251.3M138.0,255.4L139.8,256.3M146.0,259.4L147.8,260.3M168.8,270.8L170.6,271.7M170.6,271.7L172.4,272.6M181.5,277.1L183.3,278.0M192.5,282.6L199.8,286.2M199.8,286.2L202.4,287.6M207.7,290.2L209.5,291.1M209.5,291.1L212.3,292.5M216.6,294.7L218.4,295.5M220.1,296.4L221.9,297.3M227.8,300.3L230.9,301.8M242.5,307.6L248.8,310.8M127.4,247.2L129.2,248.1M132.1,249.5L133.9,250.4M133.9,250.4L140.0,253.5M149.8,258.4L158.9,262.9M160.7,263.8L162.4,264.7M164.2,265.6L166.0,266.5M168.8,267.9L172.3,269.6M183.6,275.3L197.7,282.3M201.0,284.0L202.8,284.9M207.8,287.4L213.4,290.2M131.2,246.2L138.3,249.7M143.3,252.2L145.1,253.1M179.0,270.1L184.0,272.6M184.0,272.6L187.1,274.1M191.2,276.2L196.9,279.0M196.9,279.0L198.7,279.9M211.7,286.4L215.6,288.4M232.3,296.7L236.8,298.9M236.8,298.9L238.7,299.9M238.7,299.9L243.1,302.1M244.9,303.0L250.2,305.7M135.0,245.2L149.5,252.4M149.5,252.4L152.6,254.0M154.4,254.9L158.3,256.8M179.5,267.4L197.1,276.2M217.3,286.3L219.1,287.2M220.9,288.1L222.7,289.0M222.7,289.0L224.5,289.9M247.6,301.4L256.8,306.1M256.8,306.1L260.2,307.8M148.5,249.0L150.3,249.9M152.1,250.8L164.5,257.0M168.2,258.8L170.2,259.8M180.8,265.1L188.2,268.8M188.2,268.8L196.2,272.8M206.7,278.1L208.5,279.0M208.5,279.0L210.3,279.9M210.3,279.9L218.3,283.9M255.9,302.7L263.5,306.5M142.6,243.2L148.6,246.1M148.6,246.1L150.4,247.0M153.9,248.8L155.7,249.7M155.7,249.7L169.3,256.5M178.8,261.2L181.9,262.8M204.4,274.0L210.3,277.0M210.3,277.0L212.0,277.9M248.5,296.1L253.4,298.6M253.4,298.6L255.2,299.5M255.2,299.5L257.0,300.4M155.9,246.9L158.2,248.1M182.4,260.2L184.2,261.1M190.3,264.1L195.4,266.6M217.3,277.6L219.4,278.7M225.5,281.7L227.4,282.6M227.4,282.6L231.2,284.5M235.7,286.8L244.1,291.0M254.3,296.1L262.1,300.0M265.1,301.5L266.9,302.4M268.7,303.3L270.5,304.2M198.6,265.4L200.4,266.3M224.8,278.5L238.3,285.2M249.2,290.7L255.9,294.0M264.9,298.5L266.7,299.4M161.4,243.9L163.2,244.8M173.8,250.0L175.9,251.1M181.3,253.8L183.1,254.7M183.1,254.7L192.1,259.2M192.1,259.2L199.7,263.0M199.7,263.0L201.5,263.9M201.5,263.9L206.8,266.6M210.4,268.3L217.1,271.7M217.1,271.7L220.2,273.2M220.2,273.2L224.9,275.6M224.9,275.6L226.7,276.5M226.7,276.5L228.5,277.4M228.5,277.4L239.5,282.9M254.2,290.3L256.0,291.1M256.0,291.1L257.8,292.0M261.5,293.9L265.0,295.7M157.8,239.1L159.6,240.0M190.4,255.5L192.3,256.4M194.1,257.3L195.9,258.2M195.9,258.2L197.7,259.1M197.7,259.1L205.6,263.0M205.6,263.0L207.3,263.9M241.5,281.0L256.7,288.6M256.7,288.6L258.5,289.5M258.5,289.5L266.9,293.7M268.8,294.7L279.9,300.2M282.1,301.3L283.0,301.8M161.6,238.1L165.2,239.9M168.0,241.3L169.8,242.2M169.8,242.2L171.6,243.1M171.6,243.1L173.9,244.3M173.9,244.3L178.2,246.5M185.0,249.8L190.0,252.4M209.6,262.2L214.6,264.6M244.8,279.8L246.6,280.7M271.5,293.1L274.4,294.6M276.8,295.8L281.9,298.3M173.1,241.0L194.8,251.8M211.9,260.4L213.7,261.3M218.3,263.6L224.2,266.5M236.3,272.6L238.1,273.5M249.9,279.4L251.6,280.3M285.8,297.3L288.0,298.4M289.7,299.3L290.6,299.8M169.2,236.1L181.9,242.5M183.7,243.4L199.3,251.2M201.4,252.3L203.9,253.5M243.5,273.3L247.8,275.4M247.8,275.4L250.1,276.6M263.2,283.2L271.9,287.5M275.1,289.1L276.9,290.0M173.0,235.1L189.6,243.4M194.5,245.9L201.4,249.4M221.7,259.5L232.1,264.7M251.6,274.5L253.4,275.4M277.7,287.5L284.4,290.9M284.4,290.9L286.2,291.8M286.2,291.8L288.0,292.7M288.0,292.7L289.8,293.5M289.8,293.5L296.1,296.7M176.8,234.1L183.5,237.5M183.5,237.5L190.0,240.8M190.0,240.8L192.3,241.9M203.7,247.6L205.5,248.5M205.5,248.5L211.3,251.4M236.5,264.0L238.3,264.9M240.1,265.8L247.1,269.3M281.1,286.3L285.3,288.4M290.9,291.2L300.8,296.1M193.2,239.5L196.8,241.2M196.8,241.2L198.6,242.1M198.6,242.1L210.1,247.9M211.9,248.8L213.7,249.7M221.0,253.3L228.2,256.9M235.0,260.4L236.8,261.3M264.2,274.9L269.9,277.8M283.5,284.6L288.7,287.2M290.5,288.1L292.2,289.0M292.2,289.0L294.6,290.1M294.6,290.1L296.4,291.0M296.4,291.0L305.0,295.4M199.5,239.7L212.2,246.0M246.3,263.1L253.7,266.8M262.2,271.0L265.0,272.4M301.3,290.6L303.1,291.5M193.2,233.7L201.3,237.7M203.7,238.9L206.3,240.2M223.7,248.9L228.3,251.2M228.3,251.2L230.1,252.1M232.7,253.4L234.7,254.4M236.5,255.3L240.6,257.3M267.0,270.5L276.7,275.4M282.3,278.2L284.1,279.1M305.4,289.7L312.4,293.2M312.4,293.2L313.4,293.7M192.0,230.1L193.8,231.0M193.8,231.0L195.6,231.9M200.0,234.1L201.8,235.0M219.9,244.1L227.3,247.8M233.6,250.9L241.4,254.8M256.4,262.3L258.2,263.2M274.2,271.2L276.0,272.1M280.1,274.2L290.9,279.6M290.9,279.6L292.7,280.5M304.6,286.4L307.6,287.9M195.8,229.1L198.2,230.3M204.5,233.5L206.3,234.4M206.3,234.4L208.1,235.3M221.7,242.1L233.1,247.8M253.1,257.8L257.2,259.8M262.5,262.5L267.7,265.1M279.0,270.8L283.2,272.8M288.0,275.2L289.8,276.1M289.8,276.1L293.4,277.9M296.6,279.5L303.3,282.9M306.8,284.7L309.9,286.2M311.7,287.1L313.5,288.0M313.5,288.0L315.3,288.9M315.3,288.9L319.4,290.9M319.4,290.9L321.0,291.7M206.9,231.8L208.7,232.7M208.7,232.7L210.5,233.6M212.3,234.5L215.2,235.9M241.5,249.1L244.0,250.3M244.0,250.3L245.8,251.2M245.8,251.2L248.3,252.5M248.3,252.5L250.8,253.7M250.8,253.7L252.6,254.6M252.6,254.6L255.6,256.1M260.6,258.6L262.4,259.5M285.6,271.1L287.4,272.0M320.8,288.7L324.8,290.7M217.5,234.2L219.3,235.1M219.3,235.1L232.6,241.7M232.6,241.7L235.4,243.1M235.4,243.1L239.9,245.4M244.6,247.7L248.9,249.9M248.9,249.9L260.8,255.8M292.4,271.6L294.4,272.6M294.4,272.6L321.1,286.0M321.1,286.0L322.9,286.9M324.6,287.7L328.6,289.7M207.2,226.1L214.2,229.6M214.2,229.6L217.0,231.0M228.6,236.8L244.0,244.5M244.0,244.5L252.6,248.8M255.5,250.3L257.4,251.2M278.2,261.6L285.7,265.4M285.7,265.4L289.1,267.1M289.1,267.1L291.0,268.0M304.9,275.0L306.7,275.9M324.0,284.5L332.4,288.7M211.0,225.1L215.7,227.5M222.9,231.1L229.3,234.3M239.2,239.2L240.9,240.1M242.7,241.0L247.3,243.3M254.7,247.0L263.1,251.1M272.2,255.7L274.0,256.6M274.0,256.6L286.6,262.9M296.0,267.6L302.1,270.7M315.3,277.3L317.1,278.2M318.9,279.0L320.6,279.9M320.6,279.9L328.3,283.8M214.8,224.1L216.6,225.0M216.6,225.0L227.3,230.4M227.3,230.4L229.1,231.3M243.6,238.5L245.4,239.4M267.4,250.4L269.2,251.3M282.7,258.1L290.3,261.8M295.0,264.2L296.7,265.1M328.5,281.0L340.0,286.7M218.6,223.1L222.7,225.2M227.8,227.7L229.9,228.8M229.9,228.8L237.3,232.5M242.5,235.1L244.3,236.0M246.1,236.8L248.5,238.1M250.3,239.0L253.1,240.4M257.1,242.4L265.8,246.7M265.8,246.7L273.2,250.4M273.2,250.4L275.0,251.3M276.8,252.2L278.6,253.1M285.9,256.8L287.7,257.7M287.7,257.7L293.6,260.6M296.4,262.0L298.2,262.9M307.1,267.4L308.9,268.3M315.0,271.3L320.1,273.9M326.7,277.2L328.5,278.1M222.4,222.1L229.9,225.9M231.7,226.8L233.5,227.7M233.5,227.7L241.0,231.4M241.0,231.4L242.8,232.3M242.8,232.3L244.6,233.2M244.6,233.2L246.4,234.1M303.7,262.8L309.3,265.5M317.5,269.7L320.5,271.2M326.9,274.4L328.7,275.3M334.6,278.2L338.0,279.9M338.0,279.9L347.6,284.7M242.2,229.1L244.2,230.1M244.2,230.1L245.9,231.0M248.5,232.2L259.8,237.9M278.6,247.3L280.4,248.2M314.5,265.3L316.3,266.2M316.3,266.2L321.2,268.6M332.9,274.5L341.2,278.6M350.0,283.0L351.4,283.7M236.0,223.1L239.1,224.7M256.3,233.2L260.2,235.2M260.2,235.2L265.9,238.1M265.9,238.1L271.6,240.9M273.3,241.8L281.9,246.0M291.0,250.6L292.8,251.5M294.5,252.4L298.0,254.1M305.4,257.8L307.2,258.7M307.2,258.7L309.0,259.6M309.0,259.6L317.2,263.7M321.2,265.7L334.9,272.6M334.9,272.6L336.7,273.5M338.5,274.3L340.7,275.5M348.8,279.5L352.8,281.5M233.8,219.1L236.8,220.6M244.1,224.3L246.8,225.6M255.6,230.0L265.3,234.9M265.3,234.9L268.9,236.7M268.9,236.7L286.1,245.3M296.5,250.5L300.0,252.2M301.8,253.1L303.7,254.1M310.7,257.6L314.7,259.6M346.8,275.6L348.6,276.5M348.6,276.5L350.4,277.4M237.6,218.1L242.8,220.7M258.7,228.7L260.5,229.6M262.3,230.5L265.1,231.9M275.2,236.9L278.3,238.5M278.3,238.5L284.8,241.7M287.6,243.1L289.4,244.0M289.4,244.0L293.5,246.1M313.1,255.9L314.9,256.8M317.8,258.2L319.6,259.1M319.6,259.1L339.2,268.9M345.1,271.8L354.4,276.5M241.4,217.1L243.2,218.0M243.2,218.0L265.1,229.0M265.1,229.0L267.5,230.2M267.5,230.2L286.4,239.6M286.4,239.6L288.5,240.7M306.3,249.6L308.1,250.5M308.1,250.5L315.7,254.3M315.7,254.3L325.3,259.1M325.3,259.1L327.1,260.0M327.1,260.0L332.0,262.5M339.8,266.3L353.8,273.4M357.3,275.1L359.1,276.0M360.9,276.9L365.4,279.2M365.4,279.2L366.6,279.8M264.3,225.7L266.4,226.8M266.4,226.8L269.0,228.1M275.7,231.4L290.9,239.0M295.8,241.5L300.4,243.8M320.1,253.7L322.4,254.8M322.4,254.8L326.4,256.9M326.4,256.9L329.4,258.4M345.4,266.4L347.2,267.3M347.2,267.3L360.0,273.8M360.0,273.8L363.8,275.6M363.8,275.6L365.6,276.5M249.0,215.1L251.5,216.4M251.5,216.4L261.0,221.1M261.0,221.1L262.8,222.0M268.7,225.0L271.4,226.4M279.8,230.6L298.3,239.9M304.0,242.8L306.5,244.1M306.5,244.1L308.2,245.0M310.0,245.9L311.8,246.8M311.8,246.8L317.0,249.4M317.0,249.4L318.8,250.3M318.8,250.3L320.6,251.2M324.2,253.0L326.0,253.9M326.0,253.9L330.7,256.3M336.3,259.1L344.0,263.0M344.0,263.0L345.8,263.9M354.4,268.2L365.4,273.8M373.0,277.6L374.0,278.1M268.6,222.1L270.4,223.0M288.9,232.4L312.6,244.4M312.6,244.4L319.6,247.9M319.6,247.9L328.5,252.5M328.5,252.5L330.3,253.4M330.3,253.4L337.0,256.8M342.4,259.5L353.0,264.9M353.0,264.9L354.8,265.8M358.4,267.6L360.2,268.5M362.0,269.4L366.9,271.9M366.9,271.9L372.6,274.8M372.6,274.8L374.4,275.7M374.4,275.7L376.2,276.6M376.2,276.6L377.7,277.4M260.4,215.1L271.5,220.7M276.6,223.3L284.4,227.2M325.9,248.4L327.7,249.3M345.1,258.2L349.6,260.5M349.6,260.5L357.1,264.3M357.1,264.3L358.8,265.2M358.8,265.2L361.0,266.3M361.0,266.3L362.8,267.2M373.2,272.5L375.0,273.4M272.7,218.4L276.8,220.5M281.7,223.0L288.6,226.6M298.0,231.4L306.7,235.8M308.4,236.7L310.4,237.7M325.7,245.6L327.5,246.5M327.5,246.5L336.4,251.1M336.4,251.1L344.1,255.0M344.1,255.0L346.8,256.4M346.8,256.4L351.1,258.6M354.4,260.3L358.8,262.5M358.8,262.5L360.5,263.4M360.5,263.4L363.4,264.9M363.4,264.9L365.2,265.8M380.5,273.7L385.0,276.0M264.2,211.1L271.2,214.7M277.1,217.8L283.4,221.0M285.2,221.9L292.5,225.7M294.3,226.6L301.6,230.4M301.6,230.4L303.4,231.3M305.1,232.2L307.5,233.4M309.2,234.4L311.1,235.3M311.1,235.3L313.0,236.3M313.0,236.3L315.0,237.3M315.0,237.3L318.3,239.0M318.3,239.0L322.5,241.2M324.3,242.1L326.6,243.3M326.6,243.3L328.4,244.2M346.1,253.4L348.4,254.5M348.4,254.5L350.7,255.8M350.7,255.8L352.5,256.7M358.8,259.9L362.6,261.9M369.0,265.2L370.8,266.1M381.4,271.6L386.0,274.0M388.0,275.0L388.6,275.3M268.0,210.1L273.7,213.1M273.7,213.1L276.5,214.5M317.4,235.8L331.0,242.9M332.8,243.8L335.7,245.3M335.7,245.3L338.3,246.7M354.0,254.9L358.9,257.4M358.9,257.4L365.0,260.6M366.8,261.5L375.3,265.9M375.3,265.9L377.0,266.8M377.0,266.8L378.8,267.8M378.8,267.8L383.4,270.1M383.4,270.1L387.9,272.5M287.8,217.5L316.3,232.4M323.1,236.0L324.9,237.0M324.9,237.0L326.9,238.0M326.9,238.0L332.0,240.7M332.0,240.7L340.4,245.1M346.8,248.4L348.5,249.4M354.7,252.6L356.9,253.8M368.9,260.0L371.2,261.2M380.1,265.9L384.0,267.9M384.0,267.9L391.4,271.8M394.9,273.7L395.8,274.1M275.6,208.1L277.4,209.0M291.7,216.6L293.7,217.7M293.7,217.7L301.2,221.6M310.7,226.7L314.6,228.7M314.6,228.7L319.3,231.2M324.9,234.2L326.7,235.1M328.4,236.1L330.2,237.0M342.7,243.6L356.7,251.0M360.4,253.0L370.6,258.4M370.6,258.4L374.8,260.6M374.8,260.6L376.5,261.5M378.3,262.4L392.8,270.1M392.8,270.1L394.9,271.3M394.9,271.3L397.4,272.6M281.8,208.4L283.6,209.3M283.6,209.3L285.6,210.4M285.6,210.4L287.4,211.3M296.6,216.3L300.4,218.3M309.5,223.2L313.8,225.5M313.8,225.5L316.9,227.1M316.9,227.1L318.7,228.1M318.7,228.1L326.7,232.4M326.7,232.4L331.9,235.1M331.9,235.1L333.7,236.1M338.3,238.5L340.0,239.5M363.3,251.9L365.0,252.8M365.0,252.8L382.7,262.3M382.7,262.3L402.9,273.0M285.7,207.5L287.5,208.4M302.6,216.6L310.4,220.8M310.4,220.8L312.2,221.7M314.1,222.8L316.3,223.9M316.3,223.9L318.1,224.9M322.2,227.1L330.8,231.8M330.8,231.8L332.6,232.7M376.0,256.1L382.3,259.5M384.0,260.5L385.8,261.4M388.8,263.0L403.9,271.2M403.9,271.2L405.6,272.1M405.6,272.1L406.4,272.5M287.0,205.1L288.8,206.0M298.3,211.3L300.1,212.2M302.1,213.3L306.9,215.9M306.9,215.9L308.9,217.0M310.6,218.0L312.4,218.9M312.4,218.9L315.3,220.5M321.6,223.9L326.7,226.7M326.7,226.7L328.5,227.7M328.5,227.7L330.2,228.6M330.2,228.6L332.0,229.6M332.0,229.6L333.7,230.5M335.6,231.5L347.0,237.8M348.8,238.7L350.5,239.7M364.7,247.4L366.4,248.4M366.4,248.4L370.7,250.7M406.3,270.0L408.0,271.0M290.8,204.1L319.7,220.0M324.3,222.5L330.2,225.8M330.2,225.8L332.0,226.7M332.0,226.7L337.6,229.8M337.6,229.8L339.3,230.8M343.8,233.3L350.7,237.0M370.9,248.1L375.5,250.7M375.5,250.7L377.8,252.0M379.5,252.9L387.2,257.2M387.2,257.2L394.3,261.0M399.1,263.7L400.9,264.7M400.9,264.7L402.6,265.6M402.6,265.6L410.3,269.8M410.3,269.8L413.4,271.6M294.6,203.1L299.1,205.6M312.6,213.1L317.0,215.5M318.7,216.5L325.9,220.5M327.9,221.6L332.5,224.2M332.5,224.2L336.7,226.5M341.2,229.0L343.0,230.0M357.7,238.2L360.3,239.6M369.1,244.5L370.9,245.5M402.5,263.1L409.2,266.8M298.4,202.1L300.1,203.1M318.3,213.3L322.9,215.8M336.4,223.4L351.1,231.7M351.1,231.7L354.7,233.7M356.4,234.7L358.2,235.7M358.2,235.7L360.3,236.9M360.3,236.9L362.5,238.1M362.5,238.1L364.9,239.5M364.9,239.5L366.8,240.6M366.8,240.6L371.5,243.2M373.4,244.2L379.7,247.8M381.4,248.8L395.8,256.9M395.8,256.9L397.6,257.8M397.6,257.8L401.7,260.2M415.2,267.8L417.6,269.1M302.2,201.1L307.6,204.1M322.5,212.6L325.0,214.1M326.8,215.1L330.3,217.1M353.7,230.4L355.8,231.5M360.2,234.1L364.9,236.7M364.9,236.7L381.8,246.3M381.8,246.3L386.2,248.8M386.2,248.8L390.1,251.1M396.4,254.7L402.4,258.1M407.0,260.7L408.9,261.8M408.9,261.8L423.9,270.3M306.0,200.1L307.7,201.1M307.7,201.1L309.5,202.1M309.5,202.1L316.3,206.0M316.3,206.0L323.4,210.1M325.6,211.4L327.4,212.4M327.4,212.4L329.4,213.6M329.4,213.6L331.2,214.5M331.2,214.5L336.4,217.6M342.9,221.3L344.6,222.3M344.6,222.3L348.3,224.4M351.2,226.1L353.9,227.6M353.9,227.6L355.9,228.8M357.6,229.8L359.4,230.8M359.4,230.8L361.2,231.9M361.2,231.9L380.3,242.8M380.3,242.8L382.0,243.8M382.0,243.8L383.7,244.8M387.0,246.7L388.7,247.7M388.7,247.7L391.0,249.0M392.8,250.0L394.5,251.0M396.3,252.0L398.0,253.0M398.0,253.0L399.8,254.0M406.1,257.7L407.8,258.7M407.8,258.7L410.9,260.5M410.9,260.5L415.6,263.1M317.8,203.7L319.9,205.0M319.9,205.0L325.8,208.4M325.8,208.4L331.1,211.5M335.3,213.9L344.0,219.0M344.0,219.0L345.7,220.0M345.7,220.0L347.4,221.0M347.4,221.0L349.2,222.0M351.3,223.2L353.0,224.2M353.0,224.2L358.4,227.4M358.4,227.4L363.7,230.5M363.7,230.5L365.5,231.5M372.1,235.4L375.4,237.3M380.0,240.0L386.2,243.6M389.7,245.6L393.8,248.0M395.6,249.0L398.2,250.6M398.2,250.6L403.3,253.5M403.3,253.5L412.3,258.8M412.3,258.8L416.2,261.0M416.2,261.0L430.8,269.5M315.3,199.1L317.0,200.1M318.8,201.1L320.6,202.2M320.6,202.2L333.3,209.7M335.1,210.8L336.9,211.8M336.9,211.8L339.5,213.3M356.3,223.2L361.3,226.2M361.3,226.2L366.1,229.0M366.1,229.0L375.2,234.4M406.8,253.0L413.3,256.9M413.3,256.9L422.2,262.1M422.2,262.1L434.2,269.2M317.4,197.1L320.6,199.0M325.0,201.6L328.9,203.9M328.9,203.9L330.6,204.9M341.0,211.1L342.7,212.2M348.0,215.3L352.3,217.9M352.3,217.9L356.1,220.1M356.1,220.1L361.3,223.2M361.3,223.2L363.0,224.3M365.5,225.8L373.4,230.5M373.4,230.5L375.1,231.5M375.1,231.5L378.5,233.5M378.5,233.5L387.5,238.9M403.4,248.4L405.2,249.4M411.7,253.4L418.5,257.4M423.5,260.4L429.8,264.1M429.8,264.1L437.2,268.5M322.9,197.1L333.7,203.6M343.5,209.5L350.7,213.9M350.7,213.9L352.6,215.0M352.6,215.0L354.3,216.1M354.3,216.1L358.6,218.6M360.3,219.7L375.1,228.7M375.1,228.7L376.8,229.7M376.8,229.7L380.6,231.9M385.8,235.1L387.5,236.2M399.1,243.1L400.8,244.1M406.0,247.3L412.7,251.4M412.7,251.4L427.1,260.0M427.1,260.0L431.8,262.9M431.8,262.9L435.0,264.8M435.0,264.8L441.0,268.5M325.0,195.1L328.6,197.2M328.6,197.2L337.1,202.5M337.1,202.5L338.8,203.5M338.8,203.5L343.2,206.2M343.2,206.2L345.5,207.6M349.1,209.8L360.1,216.5M360.1,216.5L361.8,217.6M361.8,217.6L365.0,219.5M365.0,219.5L366.7,220.6M366.7,220.6L370.3,222.8M379.8,228.6L392.9,236.6M392.9,236.6L407.8,245.8M412.3,248.5L414.2,249.6M414.2,249.6L415.9,250.7M418.6,252.4L425.1,256.3M430.8,259.8L434.9,262.3M434.9,262.3L444.4,268.1M333.9,197.2L335.6,198.2M335.6,198.2L343.3,203.1M345.0,204.1L346.7,205.2M350.7,207.6L376.6,223.7M379.1,225.2L380.8,226.3M384.9,228.8L386.6,229.9M386.6,229.9L393.3,234.0M393.3,234.0L395.0,235.1M396.7,236.1L398.4,237.2M398.4,237.2L402.9,240.0M402.9,240.0L407.8,243.0M407.8,243.0L409.5,244.1M411.2,245.2L412.9,246.2M418.3,249.5L431.5,257.8M431.5,257.8L437.6,261.5M440.5,263.3L444.1,265.5M334.5,194.3L337.2,195.9M337.2,195.9L346.9,202.0M346.9,202.0L350.7,204.4M362.2,211.6L365.9,214.0M365.9,214.0L368.4,215.6M373.2,218.5L374.9,219.6M374.9,219.6L387.5,227.6M387.5,227.6L389.2,228.6M389.2,228.6L392.8,230.9M392.8,230.9L398.9,234.7M398.9,234.7L400.6,235.7M400.6,235.7L419.6,247.7M419.6,247.7L421.2,248.7M421.2,248.7L422.9,249.8M422.9,249.8L424.6,250.9M424.6,250.9L437.2,258.8M437.2,258.8L447.7,265.3M447.7,265.3L451.2,267.5M336.4,192.1L352.7,202.4M352.7,202.4L354.4,203.5M356.1,204.6L357.8,205.7M357.8,205.7L359.5,206.7M359.5,206.7L369.1,212.8M369.1,212.8L370.7,213.9M374.2,216.1L376.3,217.4M376.3,217.4L378.0,218.5M378.0,218.5L379.7,219.6M379.7,219.6L382.7,221.5M382.7,221.5L384.4,222.6M384.4,222.6L391.8,227.3M393.5,228.4L396.5,230.3M398.2,231.4L407.2,237.1M407.2,237.1L409.3,238.4M409.3,238.4L419.8,245.1M419.8,245.1L425.4,248.7M425.4,248.7L427.1,249.8M427.1,249.8L428.7,250.8M428.7,250.8L431.3,252.5M442.6,259.7L447.6,262.8M449.9,264.3L451.6,265.4M451.6,265.4L453.9,266.8M340.2,191.1L341.9,192.1M366.7,208.2L371.3,211.1M373.0,212.2L374.7,213.3M374.7,213.3L379.3,216.3M391.9,224.4L396.0,227.0M399.3,229.2L402.8,231.4M402.8,231.4L409.1,235.5M409.1,235.5L410.9,236.7M410.9,236.7L415.5,239.6M415.5,239.6L417.2,240.7M428.8,248.2L430.5,249.3M439.2,254.9L443.7,257.8M452.2,263.3L453.9,264.4M453.9,264.4L455.6,265.5M455.6,265.5L457.9,266.9M349.1,193.4L353.2,196.0M353.2,196.0L354.8,197.1M354.8,197.1L356.5,198.2M356.5,198.2L360.0,200.5M373.1,209.1L374.7,210.1M374.7,210.1L376.4,211.2M380.4,213.8L383.2,215.6M386.9,218.1L389.0,219.5M391.8,221.3L400.6,227.1M407.7,231.7L409.4,232.8M433.5,248.5L435.2,249.6M436.8,250.7L438.5,251.8M438.5,251.8L450.7,259.8M450.7,259.8L452.3,260.9M452.3,260.9L456.6,263.7M456.6,263.7L461.2,266.6M347.8,189.0L349.5,190.2M349.5,190.2L368.5,202.8M368.5,202.8L370.2,203.9M370.2,203.9L371.9,205.0M371.9,205.0L377.9,209.0M385.0,213.7L386.7,214.8M386.7,214.8L392.9,218.9M392.9,218.9L406.6,228.0M406.6,228.0L420.3,237.1M420.3,237.1L424.7,240.0M428.7,242.7L430.4,243.8M439.5,249.8L441.2,250.9M441.2,250.9L444.8,253.3M444.8,253.3L460.1,263.5M460.1,263.5L461.8,264.6M463.5,265.7L464.5,266.4M351.6,188.0L353.3,189.2M359.3,193.2L360.9,194.3M360.9,194.3L374.6,203.5M374.6,203.5L376.9,205.1M379.9,207.1L381.6,208.2M381.6,208.2L383.3,209.3M391.3,214.7L397.9,219.2M405.8,224.5L407.5,225.6M407.5,225.6L410.7,227.7M412.3,228.8L414.0,230.0M425.7,237.8L427.5,239.0M427.5,239.0L434.3,243.6M434.3,243.6L436.0,244.7M436.0,244.7L440.7,247.9M355.4,187.0L361.7,191.4M361.7,191.4L369.1,196.4M375.9,201.0L385.8,207.7M385.8,207.7L397.7,215.8M397.7,215.8L399.3,216.9M399.3,216.9L401.0,218.1M401.0,218.1L409.5,223.9M412.8,226.1L414.4,227.2M420.6,231.4L422.8,233.0M424.5,234.1L426.1,235.2M426.1,235.2L435.3,241.5M437.6,243.0L439.3,244.2M439.3,244.2L442.7,246.5M454.0,254.2L455.7,255.3M455.7,255.3L463.5,260.7M465.4,262.0L469.5,264.8M469.5,264.8L471.1,265.8M359.2,186.0L360.8,187.2M360.8,187.2L362.5,188.3M362.5,188.3L370.3,193.7M370.3,193.7L376.1,197.7M377.8,198.9L379.4,200.0M383.4,202.8L390.4,207.6M390.4,207.6L408.0,219.7M408.0,219.7L410.3,221.3M416.7,225.8L418.4,226.9M418.4,226.9L422.5,229.8M422.5,229.8L424.2,230.9M424.2,230.9L429.5,234.6M431.1,235.7L435.0,238.4M437.7,240.3L439.4,241.4M439.4,241.4L448.9,247.9M448.9,247.9L450.5,249.1M450.5,249.1L452.1,250.2M452.1,250.2L455.7,252.7M455.7,252.7L457.7,254.0M457.7,254.0L459.5,255.3M469.4,262.2L471.1,263.3M471.1,263.3L472.7,264.4M363.0,185.0L370.2,190.1M370.2,190.1L372.6,191.7M372.6,191.7L374.9,193.3M374.9,193.3L376.5,194.5M383.4,199.3L390.0,203.9M390.0,203.9L395.3,207.6M399.0,210.2L404.3,214.0M406.4,215.4L408.0,216.6M410.8,218.5L414.1,220.8M414.1,220.8L421.3,225.9M427.6,230.2L429.2,231.4M429.2,231.4L432.9,234.0M432.9,234.0L434.5,235.1M434.5,235.1L441.3,239.9M441.3,239.9L442.9,241.0M442.9,241.0L444.6,242.1M453.1,248.1L464.4,256.0M464.4,256.0L467.7,258.3M467.7,258.3L477.7,265.3M366.8,184.0L374.0,189.1M374.0,189.1L384.0,196.2M384.0,196.2L386.9,198.3M389.6,200.2L395.2,204.2M395.2,204.2L409.4,214.3M409.4,214.3L411.5,215.8M411.5,215.8L418.6,220.8M436.1,233.3L438.2,234.7M438.2,234.7L442.6,237.8M442.6,237.8L448.9,242.3M448.9,242.3L458.4,249.1M458.4,249.1L460.1,250.2M461.7,251.4L469.4,256.9M469.4,256.9L475.2,261.0M475.2,261.0L477.2,262.4M370.6,183.0L372.2,184.2M376.9,187.6L388.9,196.2M394.0,199.9L402.4,205.9M409.3,210.9L414.2,214.4M429.1,225.2L430.8,226.4M430.8,226.4L432.4,227.5M434.0,228.7L436.5,230.5M436.5,230.5L438.9,232.2M453.2,242.5L461.9,248.8M464.5,250.7L466.2,251.8M469.4,254.2L471.4,255.6M471.4,255.6L473.0,256.7M476.9,259.6L478.6,260.8M483.2,264.1L484.2,264.8M387.9,191.9L392.3,195.1M392.3,195.1L393.9,196.3M395.5,197.4L411.5,209.1M413.1,210.3L418.1,213.9M418.1,213.9L427.3,220.7M427.3,220.7L429.7,222.4M429.7,222.4L445.8,234.2M447.4,235.3L453.0,239.4M453.0,239.4L455.1,241.0M455.1,241.0L456.9,242.3M456.9,242.3L458.6,243.5M458.6,243.5L460.2,244.7M475.6,255.9L481.0,259.9M481.0,259.9L486.4,263.8M486.4,263.8L487.5,264.6M379.9,182.3L390.6,190.2M390.6,190.2L400.6,197.6M400.6,197.6L404.0,200.2M419.8,211.9L424.5,215.3M424.5,215.3L426.1,216.5M426.1,216.5L428.2,218.1M428.2,218.1L429.8,219.2M429.8,219.2L431.4,220.4M431.4,220.4L445.5,230.9M445.5,230.9L447.1,232.1M447.1,232.1L451.5,235.3M451.5,235.3L453.1,236.5M457.3,239.6L459.7,241.3M467.4,247.1L469.0,248.3M469.0,248.3L471.1,249.8M483.3,258.8L484.9,260.0M484.9,260.0L486.5,261.2M489.9,263.7L490.7,264.3M382.0,180.0L389.3,185.5M389.3,185.5L403.0,195.8M403.0,195.8L428.6,215.0M441.0,224.3L442.6,225.5M442.6,225.5L454.6,234.5M460.3,238.8L463.7,241.4M463.7,241.4L465.3,242.6M465.3,242.6L469.4,245.7M469.4,245.7L471.3,247.1M471.3,247.1L472.9,248.3M472.9,248.3L484.7,257.1M484.7,257.1L486.3,258.3M486.3,258.3L488.3,259.8M488.3,259.8L489.9,261.0M385.8,179.0L387.4,180.2M387.4,180.2L393.2,184.7M393.2,184.7L407.2,195.3M416.8,202.6L418.6,204.0M418.6,204.0L422.2,206.7M423.8,208.0L428.3,211.4M428.3,211.4L429.9,212.6M429.9,212.6L431.5,213.8M431.5,213.8L434.5,216.1M441.2,221.2L451.5,229.0M451.5,229.0L459.3,235.0M459.3,235.0L460.9,236.2M462.5,237.4L464.1,238.6M473.9,246.1L476.9,248.4M476.9,248.4L482.1,252.4M482.1,252.4L486.5,255.7M488.7,257.4L491.6,259.6M495.1,262.3L497.2,263.8M389.6,178.0L391.2,179.2M391.2,179.2L398.8,185.2M400.4,186.4L402.0,187.6M402.0,187.6L403.6,188.8M403.6,188.8L409.0,193.0M409.0,193.0L422.0,203.1M423.6,204.3L426.3,206.3M426.3,206.3L428.3,207.9M447.9,223.1L454.9,228.4M458.0,230.9L462.4,234.3M462.4,234.3L465.5,236.7M469.2,239.5L470.8,240.7M470.8,240.7L472.4,241.9M472.4,241.9L481.8,249.3M481.8,249.3L483.4,250.5M483.4,250.5L485.0,251.7M485.0,251.7L493.4,258.2M393.4,177.0L395.0,178.3M395.0,178.3L396.5,179.5M398.1,180.7L400.6,182.6M400.6,182.6L402.1,183.9M403.7,185.1L410.3,190.3M411.9,191.5L420.0,197.9M420.0,197.9L421.6,199.1M423.8,200.8L425.4,202.1M425.4,202.1L428.2,204.3M429.8,205.5L433.9,208.7M439.6,213.2L441.2,214.5M441.2,214.5L442.8,215.7M451.5,222.6L453.1,223.8M453.1,223.8L454.7,225.0M454.7,225.0L456.3,226.3M460.9,229.9L462.6,231.3M471.0,237.8L472.6,239.1M472.6,239.1L474.2,240.3M481.3,245.9L496.3,257.7M498.5,259.3L500.0,260.6M501.6,261.8L503.2,263.0M503.2,263.0L503.6,263.4M397.2,176.0L410.4,186.5M412.1,187.9L417.5,192.2M417.5,192.2L440.0,210.0M443.1,212.5L445.7,214.5M445.7,214.5L447.8,216.2M450.5,218.4L455.8,222.6M460.7,226.5L462.3,227.7M462.3,227.7L464.4,229.4M464.4,229.4L470.4,234.2M470.4,234.2L483.4,244.5M483.4,244.5L486.1,246.6M486.1,246.6L506.1,262.6M506.1,262.6L506.8,263.1M401.0,175.0L402.6,176.3M408.1,180.7L410.4,182.6M412.0,183.8L414.6,186.0M416.2,187.3L421.7,191.7M421.7,191.7L427.8,196.6M427.8,196.6L440.5,206.9M440.5,206.9L448.1,213.0M448.1,213.0L450.9,215.2M450.9,215.2L457.3,220.4M460.3,222.8L467.4,228.6M467.4,228.6L469.1,229.9M472.3,232.5L479.9,238.6M479.9,238.6L484.3,242.2M484.3,242.2L485.9,243.4M485.9,243.4L489.4,246.3M497.6,252.8L499.1,254.1M501.0,255.6L508.1,261.4M508.1,261.4L509.7,262.6M406.3,175.3L407.9,176.5M411.2,179.3L425.2,190.7M425.2,190.7L426.7,191.9M428.2,193.2L429.8,194.5M429.8,194.5L437.3,200.6M437.3,200.6L441.5,204.0M441.5,204.0L445.8,207.5M449.4,210.4L452.9,213.3M452.9,213.3L454.4,214.6M457.3,216.9L479.5,235.1M479.5,235.1L482.2,237.3M482.2,237.3L486.1,240.5M490.5,244.1L492.1,245.4M492.1,245.4L496.6,249.1M496.6,249.1L500.6,252.3M500.6,252.3L503.1,254.4M408.6,173.0L411.1,175.1M411.1,175.1L422.1,184.2M422.1,184.2L423.6,185.5M433.4,193.6L435.1,195.0M435.1,195.0L448.5,206.1M450.0,207.3L451.5,208.6M451.5,208.6L463.2,218.3M470.3,224.1L471.8,225.4M471.8,225.4L473.3,226.7M473.3,226.7L475.0,228.1M475.0,228.1L484.7,236.1M484.7,236.1L486.2,237.4M486.2,237.4L487.8,238.6M487.8,238.6L494.9,244.6M494.9,244.6L497.4,246.7M497.4,246.7L502.0,250.4M511.1,258.0L512.6,259.3M512.6,259.3L516.4,262.4M412.4,172.0L415.2,174.4M415.2,174.4L416.7,175.6M416.7,175.6L418.3,176.9M418.3,176.9L419.8,178.2M419.8,178.2L422.4,180.5M422.4,180.5L424.0,181.7M424.0,181.7L429.0,185.9M429.0,185.9L439.8,195.0M439.8,195.0L443.3,198.0M443.3,198.0L462.3,214.0M462.3,214.0L463.9,215.3M463.9,215.3L468.1,218.9M479.0,228.0L480.5,229.3M480.5,229.3L483.0,231.3M483.0,231.3L492.0,238.9M492.0,238.9L493.5,240.2M493.5,240.2L502.9,248.1M514.6,258.0L516.1,259.2M516.1,259.2L517.7,260.5M517.7,260.5L519.6,262.1M416.2,171.0L426.0,179.3M426.0,179.3L430.2,182.9M430.2,182.9L432.7,185.1M432.7,185.1L439.6,191.0M439.6,191.0L441.1,192.3M441.1,192.3L442.6,193.5M442.6,193.5L444.2,194.8M458.2,206.8L459.7,208.1M459.7,208.1L467.1,214.4M467.1,214.4L474.5,220.7M474.5,220.7L490.2,234.2M490.2,234.2L503.5,245.5M505.1,246.8L518.3,258.1M518.3,258.1L520.6,260.0M520.6,260.0L522.7,261.9M420.0,170.0L423.2,172.7M423.2,172.7L424.7,174.1M424.7,174.1L426.7,175.8M426.7,175.8L436.2,184.0M436.2,184.0L437.7,185.3M437.7,185.3L452.7,198.3M452.7,198.3L454.2,199.6M454.2,199.6L457.5,202.5M457.5,202.5L462.1,206.4M462.1,206.4L471.7,214.7M471.7,214.7L477.1,219.4M477.1,219.4L478.6,220.7M496.5,236.2L499.5,238.8M499.5,238.8L501.0,240.1M501.0,240.1L505.3,243.8M505.3,243.8L511.1,248.8M511.1,248.8L512.6,250.1M514.1,251.4L515.6,252.7M515.6,252.7L518.8,255.5M518.8,255.5L524.5,260.4M524.5,260.4L525.9,261.6M423.8,169.0L426.9,171.8M426.9,171.8L432.6,176.7M432.6,176.7L443.0,185.9M443.0,185.9L444.8,187.4M444.8,187.4L447.0,189.4M447.0,189.4L450.0,192.0M450.0,192.0L459.1,200.0M459.1,200.0L460.7,201.3M460.7,201.3L463.6,203.9M463.6,203.9L465.1,205.3M482.5,220.5L484.0,221.8M484.0,221.8L485.9,223.5M487.4,224.8L492.0,228.8M492.0,228.8L494.7,231.2M494.7,231.2L496.2,232.5M496.2,232.5L497.7,233.9M497.7,233.9L499.2,235.2M507.0,242.0L508.5,243.3M510.0,244.6L511.5,245.9M511.5,245.9L516.2,250.1M521.5,254.7L527.2,259.7M528.7,261.0L529.0,261.3M432.3,172.2L434.4,174.1M434.4,174.1L435.9,175.4M435.9,175.4L440.6,179.5M440.6,179.5L442.4,181.1M442.4,181.1L448.2,186.3M448.2,186.3L451.6,189.3M451.6,189.3L455.4,192.7M455.4,192.7L460.4,197.2M460.4,197.2L468.4,204.3M469.9,205.6L471.4,206.9M471.4,206.9L473.6,209.0M473.6,209.0L475.1,210.3M478.6,213.3L486.0,219.9M486.0,219.9L487.5,221.3M489.0,222.6L491.7,225.0M491.7,225.0L495.5,228.4M503.2,235.3L507.2,238.8M508.8,240.2L512.6,243.7M512.6,243.7L514.1,245.0M514.1,245.0L518.6,248.9M518.6,248.9L520.1,250.3M520.1,250.3L522.0,252.0M522.0,252.0L525.0,254.7M528.6,257.8L531.5,260.4M531.5,260.4L532.2,261.1M431.4,167.0L432.9,168.3M432.9,168.3L434.4,169.7M435.9,171.0L444.0,178.4M444.0,178.4L445.5,179.7M445.5,179.7L448.4,182.3M449.9,183.7L454.2,187.6M460.9,193.6L462.4,194.9M462.4,194.9L463.9,196.3M463.9,196.3L466.0,198.3M466.0,198.3L478.1,209.1M478.1,209.1L479.6,210.5M479.6,210.5L486.0,216.3M486.0,216.3L489.6,219.5M489.6,219.5L491.5,221.3M491.5,221.3L496.6,225.8M498.1,227.2L499.7,228.6M505.1,233.5L510.8,238.6M517.2,244.4L518.7,245.8M518.7,245.8L520.2,247.1M520.2,247.1L521.7,248.5M521.7,248.5L529.4,255.4M529.4,255.4L531.9,257.7M531.9,257.7L533.4,259.0M437.1,167.8L440.8,171.1M440.8,171.1L444.2,174.2M444.2,174.2L448.5,178.1M448.5,178.1L449.9,179.5M449.9,179.5L451.4,180.8M452.9,182.2L464.5,192.8M464.5,192.8L481.2,208.1M481.2,208.1L482.7,209.4M482.7,209.4L484.2,210.8M484.2,210.8L485.6,212.1M485.6,212.1L487.1,213.5M506.7,231.4L510.3,234.7M510.3,234.7L511.9,236.2M513.4,237.6L533.6,256.0M442.5,168.2L444.0,169.6M444.0,169.6L445.4,171.0M445.4,171.0L458.1,182.7M458.1,182.7L464.1,188.3M464.1,188.3L468.4,192.2M469.8,193.6L474.7,198.2M480.4,203.4L482.7,205.5M482.7,205.5L484.7,207.4M487.3,209.8L488.8,211.2M495.7,217.6L497.7,219.5M497.7,219.5L502.1,223.5M502.1,223.5L503.5,224.9M513.3,233.9L519.0,239.2M519.0,239.2L530.1,249.5M530.1,249.5L531.6,250.9M531.6,250.9L533.9,253.0M533.9,253.0L536.0,254.9M447.1,168.1L449.6,170.3M449.6,170.3L452.7,173.3M463.9,183.9L470.9,190.5M470.9,190.5L472.4,191.8M472.4,191.8L473.8,193.2M479.6,198.6L484.2,202.9M484.2,202.9L492.5,210.8M492.5,210.8L497.2,215.2M497.2,215.2L499.3,217.1M499.3,217.1L501.8,219.5M501.8,219.5L505.6,223.0M505.6,223.0L507.0,224.4M507.0,224.4L513.3,230.4M513.3,230.4L515.1,232.0M538.2,253.8L539.7,255.1M539.7,255.1L541.1,256.5M446.6,163.0L450.2,166.5M450.2,166.5L451.7,167.9M454.7,170.7L466.2,181.7M466.2,181.7L467.6,183.1M467.6,183.1L481.1,195.9M481.1,195.9L482.6,197.3M482.6,197.3L488.1,202.6M499.8,213.8L502.7,216.5M502.7,216.5L504.8,218.5M504.8,218.5L508.2,221.7M508.2,221.7L512.0,225.3M514.1,227.4L522.2,235.1M522.2,235.1L523.6,236.5M523.6,236.5L528.1,240.7M528.1,240.7L534.1,246.4M534.1,246.4L539.1,251.2M539.1,251.2L541.0,253.1M545.7,257.5L547.2,258.9M547.2,258.9L547.9,259.6M450.4,162.0L452.4,164.0M454.3,165.7L455.7,167.1M455.7,167.1L459.0,170.3M459.0,170.3L463.3,174.5M471.7,182.6L473.2,184.0M473.2,184.0L485.9,196.4M485.9,196.4L491.6,201.8M499.7,209.6L501.1,211.0M501.1,211.0L502.5,212.4M502.5,212.4L508.2,217.9M508.2,217.9L518.9,228.3M518.9,228.3L520.4,229.7M520.4,229.7L535.7,244.5M535.7,244.5L537.1,245.8M537.1,245.8L540.1,248.7M546.8,255.2L551.0,259.3M454.2,161.0L455.7,162.4M457.1,163.8L458.5,165.2M465.6,172.2L467.0,173.6M467.0,173.6L470.1,176.6M470.1,176.6L473.5,179.9M473.5,179.9L476.9,183.3M476.9,183.3L479.2,185.5M481.7,187.9L483.1,189.3M483.1,189.3L484.5,190.7M484.5,190.7L486.0,192.1M486.0,192.1L489.0,195.1M489.0,195.1L490.9,197.0M490.9,197.0L500.0,205.9M500.0,205.9L501.4,207.3M501.4,207.3L502.8,208.7M507.0,212.7L509.1,214.8M509.1,214.8L514.0,219.6M523.1,228.5L529.3,234.6M529.3,234.6L530.7,236.0M530.7,236.0L534.8,240.0M534.8,240.0L536.2,241.4M538.4,243.5L545.0,250.0M545.0,250.0L549.9,254.9M549.9,254.9L554.2,259.0M458.0,160.0L466.1,168.0M466.1,168.0L467.5,169.5M467.5,169.5L468.9,170.9M470.4,172.3L473.8,175.7M473.8,175.7L475.2,177.1M475.2,177.1L480.0,181.9M480.0,181.9L482.3,184.1M482.3,184.1L485.4,187.2M485.4,187.2L486.8,188.7M488.2,190.1L497.0,198.8M497.0,198.8L501.1,202.9M503.3,205.1L504.8,206.5M504.8,206.5L511.6,213.3M511.6,213.3L513.5,215.2M513.5,215.2L515.5,217.2M522.0,223.6L530.3,231.9M530.3,231.9L531.8,233.4M536.2,237.7L541.3,242.8M541.3,242.8L542.7,244.2M468.4,165.7L469.8,167.1M475.7,173.0L479.0,176.3M479.0,176.3L487.5,184.9M487.5,184.9L488.9,186.3M491.3,188.7L496.2,193.7M496.2,193.7L499.8,197.3M499.8,197.3L501.3,198.8M501.3,198.8L511.1,208.7M465.6,158.0L473.0,165.5M473.0,165.5L477.9,170.5M477.9,170.5L482.1,174.9M482.1,174.9L483.5,176.3M483.5,176.3L484.9,177.7M487.9,180.8L491.2,184.2M491.2,184.2L492.6,185.6M492.6,185.6L494.7,187.8M496.1,189.2L497.5,190.6M502.5,195.7L503.9,197.1M509.6,203.0L512.3,205.7M512.3,205.7L514.6,208.0M469.4,157.0L476.3,164.2M476.3,164.2L482.7,170.8M486.7,174.9L491.2,179.6M491.2,179.6L493.1,181.5M493.1,181.5L494.5,183.0M494.5,183.0L496.0,184.5M496.0,184.5L497.4,186.0M497.4,186.0L498.8,187.4M498.8,187.4L501.7,190.4M501.7,190.4L508.0,197.0M508.0,197.0L518.0,207.3M474.8,157.7L476.2,159.2M476.2,159.2L478.0,161.0M478.0,161.0L479.6,162.7M479.6,162.7L481.3,164.5M481.3,164.5L482.7,166.0M484.1,167.4L491.3,175.0M492.9,176.7L500.1,184.2M500.1,184.2L510.2,194.8M510.2,194.8L512.6,197.3M512.6,197.3L514.9,199.8M514.9,199.8L518.1,203.1M518.1,203.1L519.5,204.6M519.5,204.6L521.5,206.7M477.0,155.0L478.7,156.8M478.7,156.8L480.1,158.3M480.1,158.3L481.5,159.7M481.5,159.7L483.3,161.7M483.3,161.7L491.5,170.5M492.9,171.9L503.4,183.1M504.8,184.6L512.5,192.8M517.3,197.9L522.1,203.0M522.1,203.0L523.9,204.8M523.9,204.8L524.9,206.0M482.9,156.3L484.3,157.7M487.3,161.0L488.7,162.5M488.7,162.5L493.6,167.7M494.9,169.2L510.8,186.3M512.1,187.8L516.1,192.1M516.1,192.1L517.7,193.8M484.6,153.0L486.1,154.6M486.1,154.6L490.2,159.1M490.2,159.1L492.9,162.1M492.9,162.1L494.3,163.6M495.6,165.0L499.7,169.5M499.7,169.5L504.2,174.4M504.2,174.4L508.2,178.8M508.2,178.8L510.3,181.1M512.1,183.0L517.3,188.7M517.3,188.7L518.7,190.2M520.0,191.7L521.4,193.2M522.7,194.6L526.4,198.7M527.8,200.2L530.8,203.5M530.8,203.5L531.8,204.6M491.2,155.0L492.9,157.0M497.0,161.5L506.2,171.7M506.2,171.7L507.5,173.2M507.5,173.2L508.9,174.6M520.6,187.7L522.0,189.2M522.0,189.2L524.6,192.1M534.5,203.1L535.3,203.9M510.6,171.6L523.7,186.3M523.7,186.3L538.8,203.2M497.3,151.5L498.6,153.0M498.6,153.0L500.0,154.5M500.0,154.5L501.3,156.0M502.6,157.5L513.4,169.7M513.4,169.7L514.7,171.3M514.7,171.3L516.6,173.4M516.6,173.4L527.9,186.3M527.9,186.3L529.2,187.8M532.7,191.8L534.1,193.3M534.1,193.3L536.1,195.6M536.1,195.6L537.5,197.1M537.5,197.1L542.2,202.5M502.2,151.7L503.5,153.3M503.5,153.3L510.4,161.2M511.9,162.9L521.9,174.4M521.9,174.4L525.4,178.5M525.4,178.5L527.5,180.9M527.5,180.9L530.7,184.6M530.7,184.6L532.6,186.7M532.6,186.7L536.6,191.4M536.6,191.4L538.7,193.9M538.7,193.9L540.0,195.4M540.0,195.4L544.7,200.7M544.7,200.7L545.7,201.8M503.6,148.0L508.9,154.1M510.4,155.9L511.7,157.4M511.7,157.4L513.6,159.7M513.6,159.7L525.1,173.0M525.1,173.0L528.2,176.7M528.2,176.7L536.2,186.1M536.2,186.1L545.2,196.6M545.2,196.6L549.1,201.1M507.4,147.0L508.9,148.7M508.9,148.7L511.1,151.3M511.1,151.3L521.0,163.1M521.0,163.1L526.4,169.5M528.2,171.5L529.4,173.1M529.4,173.1L537.7,182.8M537.7,182.8L539.7,185.2M539.7,185.2L542.2,188.1M544.3,190.6L549.6,196.9M549.6,196.9L552.6,200.4M511.2,146.0L516.5,152.3M516.5,152.3L523.1,160.2M528.2,166.4L535.4,175.0M535.4,175.0L539.8,180.2M553.2,196.3L554.5,197.8M554.5,197.8L556.0,199.7M518.0,148.7L520.6,151.7M520.6,151.7L521.8,153.3M521.8,153.3L526.9,159.4M526.9,159.4L528.2,161.0M528.2,161.0L534.6,168.8M534.6,168.8L542.7,178.6M546.1,182.8L549.2,186.4M549.2,186.4L551.7,189.5M551.7,189.5L552.9,191.0M552.9,191.0L554.8,193.3M554.8,193.3L556.7,195.6M556.7,195.6L558.8,198.1M558.8,198.1L559.5,199.0M518.8,144.0L520.1,145.5M520.1,145.5L525.1,151.8M525.1,151.8L527.5,154.6M527.5,154.6L532.4,160.7M532.4,160.7L534.2,162.9M534.2,162.9L535.4,164.4M535.4,164.4L537.3,166.7M537.3,166.7L538.8,168.6M538.8,168.6L543.7,174.6M543.7,174.6L545.0,176.2M547.1,178.8L548.4,180.4M548.4,180.4L551.2,183.8M552.4,185.3L554.1,187.4M558.1,192.3L559.3,193.8M559.3,193.8L560.6,195.4M560.6,195.4L562.3,197.4M562.3,197.4L562.9,198.3M523.8,144.5L525.9,147.1M525.9,147.1L527.2,148.6M528.4,150.2L529.7,151.8M539.9,164.5L541.1,166.0M541.1,166.0L546.9,173.3M546.9,173.3L549.4,176.4M549.4,176.4L551.9,179.5M551.9,179.5L553.4,181.3M553.4,181.3L559.5,189.0M559.5,189.0L563.4,193.8M563.4,193.8L565.7,196.7M534.2,151.8L535.4,153.4M535.4,153.4L539.2,158.1M539.2,158.1L547.1,168.1M547.1,168.1L549.1,170.6M550.3,172.2L554.8,177.8M554.8,177.8L556.1,179.4M556.1,179.4L558.6,182.6M558.6,182.6L559.9,184.2M559.9,184.2L561.1,185.8M561.1,185.8L562.5,187.5M562.5,187.5L564.2,189.7M530.2,140.9L535.0,147.1M535.0,147.1L537.3,150.0M537.3,150.0L539.9,153.4M539.9,153.4L546.2,161.4M546.2,161.4L560.0,179.0M560.0,179.0L561.4,180.8M561.4,180.8L565.5,186.0M565.5,186.0L566.7,187.6M566.7,187.6L568.3,189.6M568.3,189.6L570.4,192.3M570.4,192.3L571.6,193.9M571.6,193.9L573.3,196.1M537.5,144.5L539.1,146.6M539.1,146.6L540.6,148.5M543.2,151.9L544.5,153.5M555.6,168.0L556.9,169.5M556.9,169.5L558.1,171.1M558.1,171.1L559.3,172.7M560.5,174.3L566.4,181.9M566.4,181.9L570.4,187.1M570.4,187.1L572.7,190.1M537.8,138.9L539.0,140.5M539.0,140.5L549.3,154.0M549.3,154.0L550.5,155.6M550.5,155.6L553.5,159.5M553.5,159.5L554.7,161.1M554.7,161.1L555.9,162.7M555.9,162.7L560.5,168.7M560.5,168.7L562.8,171.7M562.8,171.7L564.0,173.3M568.2,178.7L569.4,180.3M569.4,180.3L572.8,184.8M572.8,184.8L577.1,190.5M577.1,190.5L578.3,192.1M578.3,192.1L580.3,194.6M541.6,137.9L545.5,143.2M546.7,144.7L552.1,151.9M552.1,151.9L554.8,155.4M554.8,155.4L558.1,159.8M564.3,168.0L566.9,171.5M566.9,171.5L568.9,174.1M568.9,174.1L574.1,181.0M574.1,181.0L575.3,182.7M575.3,182.7L578.1,186.4M578.1,186.4L582.5,192.2M582.5,192.2L583.7,193.8M583.7,193.8L583.7,193.9M545.4,136.9L546.6,138.5M546.6,138.5L547.8,140.1M547.8,140.1L549.0,141.8M549.0,141.8L554.1,148.7M555.3,150.3L558.7,154.8M558.7,154.8L564.7,162.9M564.7,162.9L565.9,164.5M565.9,164.5L567.1,166.1M567.1,166.1L572.1,172.8M572.1,172.8L573.3,174.4M573.3,174.4L576.1,178.2M576.1,178.2L577.3,179.8M578.7,181.7L584.4,189.4M584.4,189.4L586.7,192.4M586.7,192.4L587.2,193.1M550.4,137.5L555.2,144.1M555.2,144.1L557.8,147.6M557.8,147.6L559.0,149.2M559.0,149.2L562.2,153.7M562.2,153.7L563.7,155.7M563.7,155.7L565.7,158.3M565.7,158.3L566.8,160.0M566.8,160.0L569.9,164.1M571.4,166.2L573.4,168.8M573.4,168.8L577.9,174.9M577.9,174.9L581.3,179.6M581.3,179.6L584.4,183.9M585.6,185.5L590.6,192.3M558.6,142.7L559.8,144.3M559.8,144.3L561.0,145.9M561.0,145.9L563.6,149.5M563.6,149.5L566.7,153.9M567.9,155.5L569.1,157.1M569.1,157.1L592.6,189.5M592.6,189.5L594.1,191.6M556.8,133.9L558.0,135.6M561.6,140.7L571.0,153.7M571.0,153.7L575.0,159.3M575.0,159.3L576.2,161.1M576.2,161.1L579.7,165.8M580.8,167.4L590.0,180.2M591.2,181.8L594.1,186.0M560.6,132.9L570.8,147.3M570.8,147.3L572.6,149.9M572.6,149.9L574.4,152.5M588.1,171.7L589.7,174.0M589.7,174.0L590.9,175.7M590.9,175.7L597.2,184.6M598.4,186.3L599.5,187.9M599.5,187.9L601.1,190.1M564.4,131.9L566.0,134.2M572.1,142.9L577.1,150.1M582.7,158.1L584.6,160.8M584.6,160.8L588.6,166.6M588.6,166.6L589.8,168.2M589.8,168.2L592.6,172.3M597.8,179.7L599.0,181.3M599.0,181.3L604.5,189.3M568.2,130.9L569.6,133.0M573.2,138.2L576.6,143.1M576.6,143.1L580.2,148.3M581.3,149.9L588.1,159.7M588.1,159.7L589.9,162.4M589.9,162.4L594.9,169.6M594.9,169.6L596.1,171.2M596.1,171.2L597.8,173.7M597.8,173.7L601.5,179.1M601.5,179.1L602.7,180.9M602.7,180.9L606.6,186.5M606.6,186.5L607.8,188.2M572.0,129.9L573.1,131.6M573.1,131.6L575.0,134.4M575.0,134.4L583.0,146.0M583.0,146.0L584.5,148.2M584.5,148.2L586.1,150.6M586.1,150.6L589.1,155.0M590.3,156.7L597.1,166.7M597.1,166.7L598.7,169.1M598.7,169.1L600.8,172.1M600.8,172.1L606.3,180.2M606.3,180.2L610.8,186.8M610.8,186.8L611.5,187.7M575.8,128.9L579.8,134.9M579.8,134.9L581.9,138.0M581.9,138.0L585.9,143.9M585.9,143.9L587.9,146.8M587.9,146.8L592.0,152.9M592.0,152.9L593.3,154.8M593.3,154.8L594.4,156.5M595.8,158.5L597.1,160.5M597.1,160.5L600.3,165.2M600.3,165.2L601.8,167.5M601.8,167.5L605.1,172.3M605.1,172.3L607.4,175.8M607.4,175.8L609.3,178.5M609.3,178.5L610.4,180.2M610.4,180.2L615.0,186.9M579.6,127.9L580.7,129.6M580.7,129.6L581.8,131.2M585.6,136.9L586.7,138.6M586.7,138.6L589.4,142.7M589.4,142.7L593.4,148.6M593.4,148.6L600.7,159.6M600.7,159.6L603.1,163.1M603.1,163.1L605.1,166.1M606.2,167.9L607.4,169.6M607.4,169.6L609.2,172.4M611.4,175.6L614.7,180.6M614.7,180.6L615.9,182.3M615.9,182.3L618.4,186.2M588.1,134.0L589.2,135.7M594.2,143.3L595.3,144.9M595.3,144.9L602.5,155.9M602.5,155.9L603.6,157.6M608.5,165.0L613.3,172.2M614.4,173.9L615.6,175.8M615.6,175.8L621.9,185.4M587.2,125.9L588.3,127.6M589.4,129.3L593.6,135.8M593.6,135.8L594.7,137.4M594.7,137.4L598.1,142.6M600.0,145.6L604.6,152.6M604.6,152.6L606.5,155.6M606.5,155.6L608.6,158.7M613.4,166.1L614.5,167.8M614.5,167.8L616.5,170.8M616.5,170.8L618.2,173.5M618.2,173.5L619.3,175.2M619.3,175.2L620.4,176.8M620.4,176.8L625.0,183.9M625.0,183.9L625.4,184.6M591.0,124.9L592.1,126.6M605.8,147.9L608.6,152.2M608.6,152.2L609.6,153.9M609.6,153.9L613.1,159.2M614.2,160.9L615.3,162.6M615.3,162.6L616.3,164.3M616.3,164.3L617.4,166.0M617.4,166.0L618.6,167.7M618.6,167.7L619.6,169.4M620.7,171.1L622.4,173.7M622.4,173.7L623.9,176.0M623.9,176.0L625.0,177.7M626.4,179.9L627.5,181.6M627.5,181.6L628.9,183.8M609.8,147.4L615.6,156.7M615.6,156.7L619.9,163.4M619.9,163.4L621.0,165.1M621.0,165.1L632.4,183.0M598.6,122.9L599.8,124.9M599.8,124.9L605.1,133.2M605.1,133.2L606.9,136.2M606.9,136.2L608.2,138.2M608.2,138.2L611.6,143.5M611.6,143.5L613.5,146.7M613.5,146.7L614.9,148.8M617.7,153.3L618.8,155.0M618.8,155.0L620.9,158.4M620.9,158.4L622.0,160.1M622.0,160.1L625.7,166.0M625.7,166.0L627.4,168.6M627.4,168.6L628.4,170.3M634.5,179.9L635.9,182.2M604.7,125.5L609.5,133.3M618.4,147.6L621.1,151.9M621.1,151.9L622.1,153.6M623.2,155.3L624.5,157.5M606.2,120.9L607.2,122.6M607.2,122.6L609.4,126.1M609.4,126.1L610.8,128.4M610.8,128.4L616.0,136.8M620.1,143.5L623.5,149.0M623.5,149.0L628.8,157.6M632.3,163.4L633.3,165.1M610.0,119.9L611.0,121.6M611.0,121.6L618.7,134.2M618.7,134.2L623.1,141.4M624.1,143.1L628.0,149.5M628.0,149.5L631.2,154.7M632.4,156.8L633.5,158.5M633.5,158.5L634.5,160.2M635.6,162.0L637.1,164.5M637.1,164.5L638.2,166.3M638.2,166.3L639.2,168.0M639.2,168.0L646.4,179.7M613.8,118.9L615.1,121.1M615.1,121.1L617.4,124.9M617.4,124.9L618.9,127.4M618.9,127.4L619.9,129.1M619.9,129.1L621.0,130.8M621.0,130.8L622.4,133.2M622.4,133.2L627.2,141.1M627.2,141.1L633.2,151.1M633.2,151.1L634.2,152.8M634.2,152.8L635.2,154.5M636.2,156.3L637.5,158.3M637.5,158.3L640.3,163.1M640.3,163.1L649.9,178.9M623.1,127.2L624.1,128.9M624.1,128.9L625.1,130.6M625.1,130.6L628.7,136.5M628.7,136.5L631.4,141.2M631.4,141.2L632.5,142.9M632.5,142.9L633.5,144.6M633.5,144.6L635.0,147.2M635.0,147.2L637.2,150.9M637.2,150.9L640.4,156.2M621.4,116.9L624.8,122.6M624.8,122.6L625.8,124.3M625.8,124.3L631.0,133.3M631.0,133.3L637.9,144.9M637.9,144.9L638.9,146.6M638.9,146.6L640.7,149.7M640.7,149.7L641.7,151.4M641.7,151.4L642.7,153.1M642.7,153.1L645.1,157.3M645.1,157.3L646.1,159.0M646.1,159.0L653.3,171.1M653.3,171.1L656.9,177.3M626.5,118.2L627.5,119.9M627.5,119.9L629.4,123.2M629.4,123.2L630.4,124.9M630.4,124.9L635.1,132.9M635.1,132.9L636.1,134.6M636.1,134.6L637.3,136.7M647.2,153.7L648.2,155.4M652.7,163.2L656.7,170.1M656.7,170.1L657.7,171.9M629.0,114.9L630.0,116.6M630.0,116.6L636.8,128.5M636.8,128.5L637.8,130.3M637.8,130.3L640.1,134.1M640.1,134.1L643.5,140.1M644.5,141.8L646.4,145.3M646.4,145.3L650.1,151.5M650.1,151.5L653.3,157.2M661.6,171.6L663.5,175.0M663.5,175.0L663.9,175.6M632.8,113.9L634.3,116.5M634.3,116.5L636.6,120.6M636.6,120.6L637.8,122.7M637.8,122.7L639.0,124.8M639.0,124.8L642.9,131.6M642.9,131.6L644.7,134.9M647.0,139.0L648.0,140.7M648.0,140.7L651.7,147.1M651.7,147.1L654.2,151.6M654.2,151.6L655.2,153.3M655.2,153.3L656.2,155.1M663.0,167.1L665.9,172.1M665.9,172.1L667.4,174.8M636.6,112.9L640.5,119.8M640.5,119.8L642.0,122.4M643.7,125.4L645.3,128.4M645.3,128.4L651.0,138.5M651.0,138.5L652.7,141.5M652.7,141.5L657.5,150.1M657.5,150.1L661.2,156.6M661.2,156.6L662.2,158.4M662.2,158.4L663.4,160.6M663.4,160.6L664.4,162.3M664.4,162.3L665.5,164.3M666.5,166.0L667.5,167.8M640.4,111.9L641.4,113.6M649.2,127.6L650.1,129.4M650.1,129.4L651.1,131.1M652.1,132.9L654.5,137.3M654.5,137.3L657.0,141.8M657.0,141.8L658.8,145.1M658.8,145.1L670.1,165.4M670.1,165.4L674.4,173.1M644.2,110.9L645.3,113.0M645.3,113.0L646.3,114.7M646.3,114.7L647.3,116.5M647.3,116.5L649.6,120.8M649.6,120.8L650.6,122.5M662.9,145.0L663.9,146.7M663.9,146.7L671.9,161.2M671.9,161.2L672.8,162.9M672.8,162.9L674.7,166.3M651.0,115.4L653.0,119.2M654.2,121.4L655.3,123.3M655.3,123.3L659.9,131.8M663.3,138.0L664.7,140.7M668.6,147.7L669.5,149.5M669.5,149.5L671.0,152.2M671.0,152.2L672.0,153.9M672.0,153.9L672.9,155.7M672.9,155.7L681.4,171.4M651.8,108.9L654.3,113.5M654.3,113.5L657.6,119.6M662.7,129.1L663.6,130.8M667.5,138.1L669.2,141.2M669.2,141.2L670.1,142.9M670.1,142.9L675.6,153.2M675.6,153.2L676.6,154.9M683.1,167.0L685.0,170.5M655.6,107.9L656.5,109.6M656.5,109.6L658.5,113.3M658.5,113.3L659.4,115.1M659.4,115.1L660.8,117.6M660.8,117.6L661.7,119.4M661.7,119.4L664.2,124.0M664.2,124.0L668.5,132.1M671.5,137.7L672.4,139.4M672.4,139.4L674.4,143.1M675.8,145.9L677.8,149.5M677.8,149.5L678.8,151.4M678.8,151.4L685.5,164.1M659.4,106.9L660.3,108.6M660.3,108.6L667.1,121.5M668.1,123.3L672.6,131.9M676.2,138.7L682.3,150.3M682.3,150.3L685.1,155.6M685.1,155.6L687.7,160.6M690.1,165.1L691.0,166.8M691.9,168.6L692.0,168.8M663.2,105.9L664.1,107.6M664.1,107.6L671.4,121.5M675.2,128.9L676.5,131.4M676.5,131.4L678.7,135.7M679.6,137.4L683.1,144.0M683.1,144.0L689.1,155.7M689.1,155.7L695.6,167.9M667.0,104.9L672.0,114.6M675.7,121.8L676.7,123.7M676.7,123.7L686.1,142.0M686.1,142.0L687.6,144.8M687.6,144.8L690.6,150.7M693.5,156.2L694.4,158.0M694.4,158.0L695.3,159.8M697.1,163.3L698.0,165.0M698.0,165.0L699.0,166.8M699.0,166.8L699.1,167.1M671.7,105.7L672.6,107.4M672.6,107.4L673.5,109.2M673.5,109.2L674.5,111.1M680.2,122.3L681.1,124.0M693.3,148.0L700.0,161.0M700.0,161.0L702.6,166.2M674.6,102.9L679.6,112.7M679.6,112.7L682.1,117.7M682.1,117.7L683.0,119.5M683.0,119.5L683.9,121.3M683.9,121.3L692.1,137.5M692.1,137.5L695.0,143.3M695.0,143.3L695.9,145.0M695.9,145.0L696.8,146.8M705.8,164.6L706.2,165.4M678.4,101.9L680.7,106.6M680.7,106.6L681.8,108.6M681.8,108.6L684.4,113.9M684.4,113.9L686.9,118.8M686.9,118.8L689.3,123.8M689.3,123.8L695.6,136.4M697.1,139.4L701.4,147.8M701.4,147.8L703.7,152.5M682.2,100.9L684.6,105.7M684.6,105.7L685.6,107.7M685.6,107.7L688.2,113.0M688.2,113.0L692.5,121.7M692.5,121.7L693.7,124.1M693.7,124.1L694.6,125.9M696.0,128.7L696.8,130.5M700.6,138.0L704.0,145.0M704.0,145.0L705.4,147.8M705.4,147.8L710.4,157.9M712.5,162.1L713.2,163.6M686.0,99.9L692.3,112.7M692.3,112.7L693.2,114.5M693.2,114.5L698.0,124.4M698.0,124.4L698.9,126.2M698.9,126.2L700.4,129.2M700.4,129.2L701.3,131.0M704.8,138.3L705.7,140.1M705.7,140.1L707.3,143.3M709.1,147.0L711.1,151.0M711.1,151.0L715.6,160.4M716.5,162.2L716.8,162.7M689.8,98.9L691.4,102.2M691.4,102.2L692.3,104.0M692.3,104.0L693.4,106.3M693.4,106.3L694.3,108.1M694.3,108.1L695.2,109.9M695.2,109.9L696.1,111.8M696.1,111.8L697.8,115.4M708.3,137.0L709.4,139.3M709.4,139.3L710.3,141.1M693.6,97.9L695.0,100.8M695.9,102.6L697.1,105.2M699.2,109.5L701.4,114.2M702.5,116.3L704.1,119.7M704.1,119.7L704.9,121.5M704.9,121.5L706.4,124.5M706.4,124.5L707.3,126.3M713.4,139.0L714.2,140.8M719.4,151.7L723.9,161.0M697.4,96.9L698.3,98.7M698.3,98.7L699.1,100.5M699.1,100.5L705.3,113.5M705.3,113.5L706.2,115.3M706.2,115.3L708.4,120.0M711.9,127.5L713.0,129.8M713.9,131.6L717.6,139.4M727.1,159.3L727.4,160.1M701.2,95.9L702.2,97.9M702.2,97.9L703.0,99.7M703.0,99.7L706.5,107.2M706.5,107.2L707.6,109.4M707.6,109.4L708.5,111.3M708.5,111.3L710.7,116.0M710.7,116.0L713.7,122.5M716.7,128.9L723.6,143.6M723.6,143.6L724.5,145.4M724.5,145.4L725.7,148.0M725.7,148.0L727.2,151.2M705.0,94.9L705.8,96.7M705.8,96.7L707.5,100.2M707.5,100.2L709.4,104.3M709.4,104.3L710.2,106.1M710.2,106.1L711.1,107.9M711.9,109.7L712.8,111.5M712.8,111.5L713.6,113.4M713.6,113.4L714.5,115.2M714.5,115.2L720.4,127.9M725.5,138.9L726.8,141.8M726.8,141.8L728.3,144.9M728.3,144.9L729.6,147.8M730.5,149.6L732.8,154.5M733.6,156.3L734.5,158.3M708.8,93.9L710.3,97.2M710.3,97.2L712.2,101.2M712.2,101.2L713.0,103.1M713.0,103.1L714.0,105.2M714.9,107.2L716.4,110.3M718.0,113.9L720.8,119.8M720.8,119.8L721.6,121.7M721.6,121.7L723.1,124.9M725.7,130.5L726.5,132.3M726.5,132.3L727.5,134.4M729.1,138.0L731.4,143.0M731.4,143.0L738.1,157.4M713.4,94.7L717.9,104.5M720.2,109.5L721.0,111.3M723.2,116.0L724.0,117.9M724.0,117.9L726.5,123.3M726.5,123.3L727.3,125.2M727.3,125.2L729.4,129.6M729.4,129.6L730.2,131.5M730.2,131.5L731.0,133.3M732.4,136.3L735.4,142.9M737.6,147.7L738.5,149.6M738.5,149.6L739.3,151.4M741.4,156.1L741.7,156.5M716.4,91.8L717.4,94.0M718.2,95.8L719.8,99.3M719.8,99.3L721.1,102.3M721.1,102.3L725.8,112.7M725.8,112.7L726.6,114.5M726.6,114.5L727.7,116.9M733.8,130.3L734.6,132.2M734.6,132.2L736.5,136.3M736.5,136.3L739.5,142.9M739.5,142.9L745.2,155.6M720.2,90.8L721.0,92.7M721.0,92.7L722.5,95.9M725.1,101.7L729.2,111.0M735.1,124.0L736.4,127.0M736.4,127.0L737.2,128.8M737.2,128.8L738.6,132.0M738.6,132.0L740.3,135.8M746.1,148.7L747.1,150.9M724.0,89.8L725.3,92.9M728.1,99.2L729.0,101.1M731.7,107.2L732.5,109.0M732.5,109.0L733.3,110.9M736.5,118.2L737.4,120.0M737.4,120.0L738.2,121.8M738.2,121.8L739.0,123.6M739.8,125.5L742.1,130.6M742.1,130.6L742.9,132.4M747.2,142.2L748.2,144.5M748.2,144.5L750.9,150.5M750.9,150.5L752.4,153.8M727.8,88.8L730.6,95.2M730.6,95.2L736.7,109.2M736.7,109.2L738.2,112.6M738.2,112.6L739.0,114.4M739.0,114.4L739.8,116.3M741.2,119.3L742.3,121.8M742.3,121.8L744.2,126.3M744.2,126.3L745.2,128.4M746.0,130.2L748.3,135.6M748.3,135.6L749.1,137.4M749.1,137.4L749.9,139.3M749.9,139.3L750.7,141.1M750.7,141.1L752.5,145.1M752.5,145.1L753.5,147.4M754.3,149.3L755.1,151.1M732.5,89.9L733.7,92.6M733.7,92.6L735.6,97.1M737.4,101.2L738.8,104.4M738.8,104.4L739.6,106.2M740.4,108.1L742.0,111.8M742.0,111.8L743.2,114.5M744.0,116.3L744.8,118.2M744.8,118.2L748.1,125.7M748.1,125.7L749.2,128.3M749.2,128.3L752.8,136.6M752.8,136.6L754.6,140.7M754.6,140.7L759.5,151.9M759.5,151.9L759.5,152.0M735.4,86.8L736.2,88.7M736.2,88.7L737.8,92.5M739.7,96.9L740.5,98.8M743.3,105.1L746.4,112.4M746.4,112.4L749.5,119.7M749.5,119.7L750.3,121.5M750.3,121.5L751.1,123.4M751.1,123.4L751.9,125.2M751.9,125.2L755.1,132.7M755.1,132.7L756.0,134.6M756.0,134.6L757.4,138.0M757.4,138.0L761.0,146.4M761.0,146.4L761.8,148.2M761.8,148.2L762.6,150.0M762.6,150.0L763.1,151.1M744.3,97.8L749.5,110.0M749.5,110.0L750.3,111.9M750.3,111.9L755.9,124.9M755.9,124.9L756.6,126.7M757.7,129.2L761.4,138.0M761.4,138.0L764.1,144.2M764.1,144.2L764.9,146.0M764.9,146.0L766.7,150.2M743.0,84.8L749.5,100.3M749.5,100.3L751.5,104.9M751.5,104.9L752.3,106.8M755.2,113.7L755.9,115.5M755.9,115.5L756.7,117.3M756.7,117.3L758.0,120.4M758.0,120.4L759.8,124.6M759.8,124.6L760.8,127.1M760.8,127.1L765.0,137.0M765.0,137.0L765.8,138.8M766.6,140.6L767.5,142.9M767.5,142.9L768.8,145.9M768.8,145.9L770.2,149.3M748.9,88.7L749.6,90.6M749.6,90.6L750.4,92.4M750.4,92.4L752.8,98.1M752.8,98.1L754.4,102.0M754.4,102.0L755.2,103.8M755.2,103.8L756.0,105.7M756.0,105.7L756.8,107.8M758.4,111.5L765.1,127.5M766.4,130.8L767.2,132.6M767.2,132.6L770.5,140.6M770.5,140.6L771.3,142.4M771.3,142.4L772.8,145.9M772.8,145.9L773.5,147.8M750.6,82.8L751.4,84.7M751.4,84.7L756.4,96.9M757.8,100.2L758.6,102.1M758.6,102.1L759.6,104.6M759.6,104.6L760.4,106.5M767.7,124.0L769.2,127.8M770.6,131.1L771.4,133.0M771.4,133.0L773.7,138.6M773.7,138.6L774.5,140.5M774.5,140.5L775.3,142.3M754.4,81.8L756.8,87.8M756.8,87.8L758.3,91.3M758.3,91.3L760.8,97.4M760.8,97.4L762.6,101.8M762.6,101.8L764.5,106.5M764.5,106.5L767.9,114.7M767.9,114.7L768.6,116.5M768.6,116.5L770.4,120.7M770.4,120.7L771.2,122.7M771.2,122.7L775.0,132.0M775.8,133.8L776.5,135.7M776.5,135.7L778.7,141.0M778.7,141.0L779.6,143.3M779.6,143.3L780.4,145.2M780.4,145.2L781.0,146.6M758.2,80.8L760.6,86.8M762.4,91.2L763.2,93.1M763.2,93.1L766.9,102.2M766.9,102.2L768.5,106.3M768.5,106.3L770.9,112.1M770.9,112.1L774.5,120.9M774.5,120.9L775.2,122.7M775.2,122.7L781.7,138.5M781.7,138.5L784.6,145.7M762.0,79.8L762.7,81.7M762.7,81.7L763.5,83.5M763.5,83.5L764.4,85.7M766.0,89.7L769.9,99.3M772.7,106.4L773.4,108.2M773.4,108.2L779.1,122.2M779.1,122.2L779.8,124.0M779.8,124.0L781.2,127.4M781.2,127.4L781.9,129.3M781.9,129.3L784.7,136.1M784.7,136.1L785.4,138.0M785.4,138.0L786.2,139.8M786.2,139.8L786.9,141.7M786.9,141.7L787.7,143.5M787.7,143.5L788.2,144.7M765.8,78.8L766.9,81.5M766.9,81.5L767.6,83.3M768.8,86.4L770.6,90.8M770.6,90.8L771.3,92.6M771.3,92.6L772.1,94.5M772.1,94.5L772.9,96.7M772.9,96.7L774.3,100.2M774.3,100.2L775.1,102.0M775.1,102.0L777.8,108.7M777.8,108.7L779.6,113.3M779.6,113.3L780.3,115.2M780.3,115.2L781.2,117.4M781.2,117.4L783.4,122.8M784.9,126.5L785.6,128.4M785.6,128.4L787.1,132.0M790.1,139.6L790.8,141.4M790.8,141.4L791.8,143.8M769.6,77.8L770.3,79.7M771.7,83.1L772.7,85.6M780.9,106.1L781.7,108.0M781.7,108.0L786.0,118.8M786.0,118.8L787.5,122.5M787.5,122.5L789.3,127.0M789.3,127.0L790.0,128.9M790.0,128.9L790.8,130.7M790.8,130.7L791.5,132.6M791.5,132.6L792.2,134.4M792.2,134.4L795.6,142.8" stroke="#c5c5c5" stroke-width="2.2" fill="none" clip-path="url(#sc)" shape-rendering="crispEdges"/><path d="M243,217h3v2h-3zM251,215h3v2h-3zM271,210h3v2h-3zM282,207h3v2h-3zM301,202h3v2h-3zM313,199h3v2h-3zM320,197h3v2h-3zM338,192h3v2h-3zM348,190h3v2h-3zM361,186h3v2h-3zM367,185h3v2h-3zM375,182h3v2h-3zM396,177h3v2h-3zM433,167h3v2h-3zM442,165h3v2h-3zM448,163h3v2h-3zM506,148h3v2h-3zM513,146h3v2h-3zM521,144h3v2h-3zM531,141h3v2h-3zM542,138h3v2h-3zM555,135h3v2h-3zM564,132h3v2h-3zM583,127h3v2h-3zM607,121h3v2h-3zM616,118h3v2h-3zM627,116h3v2h-3zM632,114h3v2h-3zM661,107h3v2h-3zM668,105h3v2h-3zM674,103h3v2h-3zM690,99h3v2h-3zM699,96h3v2h-3zM723,90h3v2h-3zM733,88h3v2h-3zM750,83h3v2h-3z" fill="#111"/><line x1="249.7" y1="265.8" x2="788.5" y2="118.5" stroke="#000" stroke-width="3"/><path d="M252,263h2v2h-2zM257,262h4v4h-4zM261,261h2v2h-2zM264,263h3v3h-3zM266,261h2v2h-2zM275,257h3v3h-3zM279,256h2v2h-2zM285,255h3v3h-3zM287,256h3v3h-3zM290,253h4v4h-4zM292,257h3v3h-3zM298,252h3v3h-3zM301,253h4v4h-4zM303,252h4v4h-4zM305,250h2v2h-2zM304,247h3v3h-3zM311,245h2v2h-2zM310,249h2v2h-2zM313,246h3v3h-3zM318,248h2v2h-2zM321,243h3v3h-3zM323,245h2v2h-2zM328,241h3v3h-3zM328,243h2v2h-2zM328,241h3v3h-3zM332,242h4v4h-4zM337,238h2v2h-2zM341,239h3v3h-3zM342,238h2v2h-2zM352,234h4v4h-4zM358,232h3v3h-3zM370,230h2v2h-2zM370,232h2v2h-2zM371,232h4v4h-4zM374,231h4v4h-4zM378,228h3v3h-3zM381,226h2v2h-2zM386,229h3v3h-3zM391,225h3v3h-3zM395,226h2v2h-2zM400,224h3v3h-3zM406,223h2v2h-2zM406,223h3v3h-3zM421,217h2v2h-2zM421,216h2v2h-2zM427,215h3v3h-3zM434,216h2v2h-2zM436,214h4v4h-4zM440,212h4v4h-4zM450,209h2v2h-2zM454,209h3v3h-3zM458,207h4v4h-4zM461,203h2v2h-2zM474,204h4v4h-4zM476,202h4v4h-4zM480,200h4v4h-4zM487,201h3v3h-3zM489,197h4v4h-4zM491,200h4v4h-4zM489,199h4v4h-4zM495,198h4v4h-4zM497,195h4v4h-4zM506,190h3v3h-3zM505,194h3v3h-3zM507,196h2v2h-2zM538,183h2v2h-2zM537,186h4v4h-4zM550,185h4v4h-4zM551,179h4v4h-4zM553,181h3v3h-3zM559,180h4v4h-4zM567,175h2v2h-2zM571,177h3v3h-3zM572,177h4v4h-4zM576,174h2v2h-2zM587,173h2v2h-2zM593,168h4v4h-4zM597,171h4v4h-4zM598,169h2v2h-2zM602,167h3v3h-3zM609,168h4v4h-4zM617,162h3v3h-3zM616,162h3v3h-3zM622,163h4v4h-4zM620,163h3v3h-3zM628,162h3v3h-3zM632,163h3v3h-3zM632,156h2v2h-2zM637,158h4v4h-4zM636,160h4v4h-4zM644,155h4v4h-4zM646,157h3v3h-3zM649,155h2v2h-2zM651,153h4v4h-4zM652,153h2v2h-2zM656,150h3v3h-3zM660,151h4v4h-4zM668,147h4v4h-4zM670,151h2v2h-2zM677,148h4v4h-4zM680,144h2v2h-2zM682,147h4v4h-4zM686,145h2v2h-2zM700,144h3v3h-3zM695,142h2v2h-2zM702,142h4v4h-4zM707,141h2v2h-2zM713,137h4v4h-4zM713,138h3v3h-3zM717,135h4v4h-4zM731,131h3v3h-3zM734,133h2v2h-2zM735,132h3v3h-3zM744,129h4v4h-4zM744,128h3v3h-3zM749,128h2v2h-2zM751,127h4v4h-4zM752,127h2v2h-2zM762,123h4v4h-4zM774,121h4v4h-4zM781,119h2v2h-2zM782,119h2v2h-2zM784,117h3v3h-3zM788,116h3v3h-3z" fill="#000"/><line x1="788.5" y1="118.5" x2="1077.5" y2="593.2" stroke="#000" stroke-width="4"/><path d="M790,119h2v2h-2zM792,126h3v3h-3zM795,130h3v3h-3zM798,138h2v2h-2zM799,138h3v3h-3zM803,142h4v4h-4zM806,144h3v3h-3zM803,145h4v4h-4zM808,148h3v3h-3zM805,154h2v2h-2zM808,155h4v4h-4zM813,162h2v2h-2zM817,166h4v4h-4zM818,175h2v2h-2zM819,171h4v4h-4zM828,179h2v2h-2zM831,189h3v3h-3zM830,192h4v4h-4zM832,193h2v2h-2zM837,197h3v3h-3zM835,204h4v4h-4zM841,209h4v4h-4zM846,212h3v3h-3zM842,215h2v2h-2zM845,220h3v3h-3zM849,218h3v3h-3zM854,227h4v4h-4zM854,231h4v4h-4zM856,231h3v3h-3zM860,237h2v2h-2zM861,235h4v4h-4zM862,245h2v2h-2zM866,244h4v4h-4zM875,260h2v2h-2zM879,266h3v3h-3zM879,268h4v4h-4zM882,267h4v4h-4zM883,276h3v3h-3zM883,278h3v3h-3zM887,282h3v3h-3zM888,284h4v4h-4zM892,286h4v4h-4zM895,290h2v2h-2zM897,295h2v2h-2zM899,300h4v4h-4zM899,302h3v3h-3zM910,319h2v2h-2zM912,322h4v4h-4zM912,324h2v2h-2zM915,326h3v3h-3zM919,333h2v2h-2zM920,335h3v3h-3zM923,336h3v3h-3zM924,341h2v2h-2zM931,354h3v3h-3zM934,356h2v2h-2zM931,357h4v4h-4zM939,360h2v2h-2zM936,365h3v3h-3zM939,364h2v2h-2zM938,368h3v3h-3zM947,382h3v3h-3zM952,387h4v4h-4zM952,389h3v3h-3zM955,389h4v4h-4zM955,392h2v2h-2zM956,396h4v4h-4zM960,402h3v3h-3zM964,405h3v3h-3zM970,409h2v2h-2zM969,413h4v4h-4zM971,417h4v4h-4zM972,422h3v3h-3zM977,425h3v3h-3zM979,431h3v3h-3zM981,438h4v4h-4zM980,436h3v3h-3zM983,439h4v4h-4zM988,444h2v2h-2zM988,447h4v4h-4zM990,455h3v3h-3zM999,463h3v3h-3zM998,467h4v4h-4zM1001,468h2v2h-2zM1009,476h3v3h-3zM1008,481h3v3h-3zM1018,499h2v2h-2zM1023,496h2v2h-2zM1024,506h2v2h-2zM1027,510h3v3h-3zM1028,509h3v3h-3zM1029,516h4v4h-4zM1030,522h4v4h-4zM1031,520h3v3h-3zM1035,527h4v4h-4zM1036,530h3v3h-3zM1040,532h2v2h-2zM1043,539h3v3h-3zM1048,545h2v2h-2zM1050,547h4v4h-4zM1054,551h3v3h-3zM1057,557h2v2h-2zM1059,559h2v2h-2zM1062,566h2v2h-2zM1064,568h2v2h-2zM1063,571h2v2h-2zM1066,573h3v3h-3zM1072,579h2v2h-2zM1075,589h4v4h-4z" fill="#000"/><line x1="1079.8" y1="592.3" x2="643.1" y2="761.2" stroke="#000" stroke-width="4.5"/><path d="M1078,591h2v2h-2zM1078,591h3v3h-3zM1075,593h2v2h-2zM1076,591h4v4h-4zM1073,592h2v2h-2zM1071,593h3v3h-3zM1070,597h2v2h-2zM1068,594h3v3h-3zM1067,596h3v3h-3zM1062,599h2v2h-2zM1063,597h4v4h-4zM1056,597h2v2h-2zM1053,601h3v3h-3zM1050,599h2v2h-2zM1051,602h2v2h-2zM1050,603h4v4h-4zM1050,600h4v4h-4zM1046,603h4v4h-4zM1044,603h2v2h-2zM1042,603h2v2h-2zM1042,608h2v2h-2zM1038,606h3v3h-3zM1037,607h2v2h-2zM1037,606h2v2h-2zM1039,607h3v3h-3zM1036,606h2v2h-2zM1032,608h2v2h-2zM1032,608h2v2h-2zM1030,609h2v2h-2zM1023,612h4v4h-4zM1025,610h3v3h-3zM1024,613h3v3h-3zM1021,615h3v3h-3zM1022,615h3v3h-3zM1017,615h2v2h-2zM1016,613h3v3h-3zM1017,616h3v3h-3zM1015,619h4v4h-4zM1011,616h3v3h-3zM1008,618h4v4h-4zM1008,617h4v4h-4zM1005,618h2v2h-2zM1001,618h2v2h-2zM1001,622h3v3h-3zM1000,623h4v4h-4zM993,621h3v3h-3zM996,623h3v3h-3zM997,624h4v4h-4zM994,626h4v4h-4zM993,624h4v4h-4zM990,627h4v4h-4zM989,627h2v2h-2zM986,627h2v2h-2zM986,627h2v2h-2zM986,627h4v4h-4zM982,628h3v3h-3zM981,629h2v2h-2zM979,630h4v4h-4zM977,631h4v4h-4zM971,632h4v4h-4zM970,631h3v3h-3zM971,631h3v3h-3zM967,633h3v3h-3zM965,633h3v3h-3zM968,635h3v3h-3zM964,635h3v3h-3zM958,638h3v3h-3zM956,639h3v3h-3zM954,640h3v3h-3zM952,641h2v2h-2zM952,640h2v2h-2zM947,644h3v3h-3zM945,643h3v3h-3zM943,640h4v4h-4zM945,647h3v3h-3zM936,646h3v3h-3zM935,645h2v2h-2zM936,645h2v2h-2zM930,646h4v4h-4zM930,648h2v2h-2zM932,647h3v3h-3zM929,650h4v4h-4zM929,652h3v3h-3zM926,648h4v4h-4zM924,653h2v2h-2zM922,649h4v4h-4zM919,653h3v3h-3zM916,655h2v2h-2zM915,654h3v3h-3zM912,654h4v4h-4zM912,655h2v2h-2zM910,656h2v2h-2zM909,656h4v4h-4zM909,657h2v2h-2zM904,657h2v2h-2zM902,656h4v4h-4zM899,659h3v3h-3zM898,662h4v4h-4zM896,660h3v3h-3zM894,665h3v3h-3zM891,662h3v3h-3zM893,664h3v3h-3zM889,662h3v3h-3zM890,664h3v3h-3zM887,666h4v4h-4zM885,666h4v4h-4zM884,667h4v4h-4zM885,664h4v4h-4zM879,667h4v4h-4zM874,672h3v3h-3zM874,670h4v4h-4zM876,667h3v3h-3zM874,672h4v4h-4zM872,666h2v2h-2zM871,668h4v4h-4zM868,669h3v3h-3zM868,670h3v3h-3zM869,672h4v4h-4zM865,673h3v3h-3zM865,674h3v3h-3zM866,671h3v3h-3zM860,670h2v2h-2zM862,678h4v4h-4zM860,676h2v2h-2zM854,677h2v2h-2zM856,677h4v4h-4zM856,677h4v4h-4zM854,679h4v4h-4zM853,674h2v2h-2zM852,679h4v4h-4zM855,679h4v4h-4zM847,679h2v2h-2zM847,680h2v2h-2zM844,684h4v4h-4zM843,681h3v3h-3zM837,679h3v3h-3zM842,682h2v2h-2zM839,685h2v2h-2zM837,685h2v2h-2zM834,688h4v4h-4zM832,687h3v3h-3zM832,688h3v3h-3zM827,686h3v3h-3zM828,689h2v2h-2zM828,691h4v4h-4zM828,688h4v4h-4zM827,690h4v4h-4zM822,689h4v4h-4zM824,690h3v3h-3zM821,693h3v3h-3zM816,693h3v3h-3zM816,690h3v3h-3zM817,691h3v3h-3zM811,693h4v4h-4zM809,696h2v2h-2zM806,698h2v2h-2zM805,698h2v2h-2zM802,700h2v2h-2zM804,697h4v4h-4zM806,698h2v2h-2zM801,697h3v3h-3zM795,703h3v3h-3zM789,700h3v3h-3zM793,702h4v4h-4zM790,703h4v4h-4zM787,703h3v3h-3zM783,706h2v2h-2zM778,707h3v3h-3zM784,705h3v3h-3zM777,706h4v4h-4zM777,707h2v2h-2zM773,705h3v3h-3zM770,707h3v3h-3zM768,711h3v3h-3zM766,713h4v4h-4zM762,716h4v4h-4zM758,714h4v4h-4zM759,714h2v2h-2zM755,718h4v4h-4zM753,715h4v4h-4zM751,717h4v4h-4zM750,718h2v2h-2zM750,718h3v3h-3zM745,717h2v2h-2zM742,717h4v4h-4zM740,721h3v3h-3zM733,722h4v4h-4zM734,720h4v4h-4zM726,726h2v2h-2zM725,727h4v4h-4zM721,726h2v2h-2zM724,731h2v2h-2zM718,729h2v2h-2zM715,732h2v2h-2zM714,728h4v4h-4zM713,730h3v3h-3zM710,732h4v4h-4zM713,731h2v2h-2zM711,733h4v4h-4zM708,734h2v2h-2zM706,733h2v2h-2zM703,736h4v4h-4zM700,736h2v2h-2zM698,739h4v4h-4zM694,738h2v2h-2zM696,737h2v2h-2zM690,739h4v4h-4zM694,743h2v2h-2zM690,741h2v2h-2zM687,741h3v3h-3zM690,745h2v2h-2zM685,747h4v4h-4zM684,743h3v3h-3zM681,744h2v2h-2zM679,746h3v3h-3zM678,743h2v2h-2zM678,746h2v2h-2zM677,746h4v4h-4zM673,746h3v3h-3zM676,749h2v2h-2zM672,749h4v4h-4zM666,751h4v4h-4zM665,752h2v2h-2zM663,752h2v2h-2zM662,749h2v2h-2zM659,756h3v3h-3zM658,756h2v2h-2zM654,756h4v4h-4zM655,754h3v3h-3zM655,756h2v2h-2zM651,756h3v3h-3zM651,756h3v3h-3zM648,759h3v3h-3zM648,755h4v4h-4zM647,758h4v4h-4zM646,759h4v4h-4zM644,758h4v4h-4zM644,757h4v4h-4z" fill="#000"/><path d="M643.1,761.2L640.5,753.5M640.5,753.5L635.4,738.9M635.4,738.9L634.0,734.7M634.0,734.7L631.9,728.8M631.9,728.8L630.9,725.9M627.5,716.1L624.3,707.0M624.3,707.0L609.7,664.7M609.7,664.7L604.7,650.4M604.7,650.4L600.4,638.0M600.4,638.0L597.3,629.1M597.3,629.1L593.2,617.2M593.2,617.2L591.4,612.1M591.4,612.1L590.4,609.2M590.4,609.2L589.4,606.4M589.4,606.4L585.4,594.7M585.4,594.7L583.4,588.8M583.4,588.8L580.3,579.9M580.3,579.9L576.7,569.7M576.7,569.7L574.1,562.2M574.1,562.2L573.1,559.4M573.1,559.4L568.1,545.0M568.1,545.0L567.1,542.1M561.0,524.3L560.0,521.5M560.0,521.5L559.0,518.5M559.0,518.5L552.4,499.5M552.4,499.5L550.8,495.0M550.8,495.0L543.0,472.5M543.0,472.5L540.9,466.5M540.9,466.5L538.9,460.8M538.9,460.8L533.9,446.2M533.9,446.2L532.9,443.4M532.9,443.4L529.4,433.3M529.4,433.3L529.1,432.6" stroke="#000" stroke-width="3.5" fill="none"/><path d="M642,760h4v4h-4zM643,759h3v3h-3zM638,747h2v2h-2zM636,744h3v3h-3zM637,744h4v4h-4zM634,736h4v4h-4zM631,733h2v2h-2zM630,727h3v3h-3zM629,724h3v3h-3zM628,716h2v2h-2zM624,707h2v2h-2zM624,707h3v3h-3zM622,707h4v4h-4zM620,700h2v2h-2zM620,697h4v4h-4zM619,689h2v2h-2zM617,687h4v4h-4zM613,687h4v4h-4zM615,684h3v3h-3zM612,676h3v3h-3zM612,668h4v4h-4zM609,666h3v3h-3zM604,660h2v2h-2zM604,656h3v3h-3zM605,651h2v2h-2zM605,652h3v3h-3zM600,646h2v2h-2zM601,637h2v2h-2zM593,622h3v3h-3zM592,616h2v2h-2zM591,614h3v3h-3zM593,610h4v4h-4zM590,608h3v3h-3zM584,593h2v2h-2zM584,585h3v3h-3zM582,589h3v3h-3zM582,584h2v2h-2zM576,584h2v2h-2zM579,575h2v2h-2zM579,573h3v3h-3zM580,571h3v3h-3zM571,561h3v3h-3zM573,556h2v2h-2zM572,550h3v3h-3zM567,547h4v4h-4zM567,544h2v2h-2zM564,541h3v3h-3zM566,541h4v4h-4zM565,540h4v4h-4zM563,531h4v4h-4zM560,530h4v4h-4zM560,525h3v3h-3zM561,521h4v4h-4zM555,504h4v4h-4zM552,501h2v2h-2zM552,499h3v3h-3zM551,491h4v4h-4zM547,488h3v3h-3zM547,484h4v4h-4zM545,482h2v2h-2zM542,478h4v4h-4zM542,477h3v3h-3zM542,475h2v2h-2zM538,467h4v4h-4zM536,454h2v2h-2zM536,454h2v2h-2zM528,437h2v2h-2z" fill="#000"/><path d="M529.1,432.6L525.4,433.8M525.4,433.8L515.7,436.9M515.7,436.9L508.6,439.1M508.6,439.1L488.4,445.6M488.4,445.6L485.1,446.6M485.1,446.6L478.3,448.8M478.3,448.8L475.4,449.7M466.8,452.4L448.5,458.3M448.5,458.3L438.6,461.4M438.6,461.4L435.1,462.5M435.1,462.5L413.4,469.4M413.4,469.4L410.5,470.4M407.2,471.4L402.8,472.8M402.8,472.8L399.9,473.7M399.9,473.7L393.6,475.7M393.6,475.7L374.6,481.8M374.6,481.8L352.7,488.7M352.7,488.7L348.4,490.1M348.4,490.1L345.5,491.0M342.7,491.9L336.2,494.0M336.2,494.0L329.4,496.1M329.4,496.1L326.6,497.1M326.6,497.1L315.9,500.4M305.2,503.9L299.9,505.5M299.9,505.5L282.9,510.9M282.9,510.9L274.5,513.6M274.5,513.6L266.3,516.2M266.3,516.2L260.3,518.1M260.3,518.1L257.5,519.0M257.5,519.0L233.5,526.7M233.5,526.7L230.6,527.6M230.6,527.6L204.0,536.1M204.0,536.1L187.5,541.3M187.5,541.3L168.1,547.5M168.1,547.5L165.2,548.4M162.3,549.3L159.2,550.3M154.2,551.9L142.5,555.6M142.5,555.6L137.7,557.1M137.7,557.1L131.4,559.2M131.4,559.2L114.5,564.5M114.5,564.5L96.9,570.1M76.9,576.5L61.8,581.3M61.8,581.3L59.0,582.2M59.0,582.2L38.2,588.8M38.2,588.8L35.4,589.7M35.4,589.7L17.2,595.5M17.2,595.5L12.1,597.1M12.1,597.1L-6.5,603.0" stroke="#000" stroke-width="3" fill="none"/><path d="M527,430h4v4h-4zM524,436h4v4h-4zM524,434h2v2h-2zM517,433h2v2h-2zM520,437h4v4h-4zM511,438h4v4h-4zM484,444h2v2h-2zM483,444h3v3h-3zM463,452h4v4h-4zM460,453h4v4h-4zM457,456h2v2h-2zM452,455h3v3h-3zM449,458h3v3h-3zM443,458h2v2h-2zM439,456h3v3h-3zM427,466h2v2h-2zM425,463h3v3h-3zM425,470h3v3h-3zM418,463h4v4h-4zM417,468h4v4h-4zM402,468h2v2h-2zM395,472h2v2h-2zM386,477h3v3h-3zM381,480h2v2h-2zM375,479h4v4h-4zM378,481h3v3h-3zM371,482h2v2h-2zM361,482h4v4h-4zM362,486h2v2h-2zM360,486h2v2h-2zM355,485h3v3h-3zM341,485h4v4h-4zM338,491h4v4h-4zM336,491h3v3h-3zM334,489h2v2h-2zM334,492h4v4h-4zM332,493h2v2h-2zM322,496h2v2h-2zM313,499h2v2h-2zM314,500h4v4h-4zM308,500h3v3h-3zM312,501h4v4h-4zM305,503h4v4h-4zM297,500h4v4h-4zM280,513h4v4h-4zM262,515h2v2h-2zM262,514h2v2h-2zM247,521h2v2h-2zM247,518h3v3h-3zM244,520h2v2h-2zM232,525h2v2h-2zM228,527h2v2h-2zM220,529h2v2h-2zM217,530h4v4h-4zM206,533h3v3h-3zM189,541h4v4h-4zM184,539h2v2h-2zM173,546h3v3h-3zM167,547h3v3h-3zM166,546h2v2h-2zM164,544h4v4h-4zM155,549h2v2h-2zM145,554h4v4h-4zM136,556h3v3h-3zM138,555h4v4h-4zM135,558h2v2h-2zM123,557h3v3h-3zM120,562h3v3h-3zM117,562h3v3h-3zM120,562h4v4h-4zM115,563h4v4h-4zM113,562h4v4h-4zM109,566h4v4h-4zM108,566h3v3h-3zM103,567h3v3h-3zM99,571h2v2h-2zM95,567h3v3h-3zM86,569h2v2h-2zM84,573h2v2h-2zM83,573h2v2h-2zM68,576h3v3h-3zM65,579h3v3h-3zM60,581h2v2h-2zM56,579h2v2h-2zM40,588h3v3h-3zM34,589h4v4h-4zM-1,599h4v4h-4zM-8,600h4v4h-4zM-14,601h2v2h-2zM-17,605h4v4h-4z" fill="#000"/><path d="M615.9,674.0L617.8,673.3M639.3,665.4L641.6,664.6M641.6,664.6L645.8,663.0M661.4,657.3L663.3,656.6M669.2,654.4L673.6,652.8M673.6,652.8L675.5,652.1M675.5,652.1L677.3,651.4M677.3,651.4L686.5,648.0M688.4,647.3L690.2,646.6M694.0,645.3L695.9,644.6M705.8,640.9L713.2,638.2M713.2,638.2L715.1,637.5M717.4,636.6L725.5,633.7M725.5,633.7L728.1,632.7M728.1,632.7L730.9,631.6M740.9,628.0L742.7,627.3M742.7,627.3L745.2,626.4M745.2,626.4L747.1,625.7M747.1,625.7L748.9,625.0M748.9,625.0L750.8,624.3M750.8,624.3L753.1,623.5M753.1,623.5L754.9,622.8M766.5,618.5L768.8,617.7M768.8,617.7L770.7,617.0M770.7,617.0L772.5,616.3M772.5,616.3L777.4,614.5M777.4,614.5L782.3,612.7M782.3,612.7L787.5,610.8M787.5,610.8L791.2,609.4M797.0,607.3L801.8,605.5M801.8,605.5L803.7,604.8M803.7,604.8L806.8,603.7M806.8,603.7L813.9,601.1M813.9,601.1L815.8,600.4M815.8,600.4L819.4,599.0M819.4,599.0L822.6,597.9M822.6,597.9L828.7,595.6M828.7,595.6L830.6,594.9M830.6,594.9L832.5,594.2M832.5,594.2L836.6,592.7M836.6,592.7L845.5,589.4M845.5,589.4L847.5,588.7M847.5,588.7L849.3,588.0M849.3,588.0L852.0,587.0M857.2,585.1L866.1,581.8M869.9,580.5L874.1,578.9M874.1,578.9L877.7,577.6M887.6,573.9L889.4,573.2M889.4,573.2L896.0,570.8M899.7,569.4L901.9,568.6M901.9,568.6L903.8,568.0M903.8,568.0L907.9,566.5M911.6,565.1L913.5,564.4M917.1,563.0L919.0,562.4M919.0,562.4L920.9,561.7M920.9,561.7L923.6,560.7M923.6,560.7L925.8,559.8M927.7,559.2L930.8,558.0M934.0,556.8L941.0,554.2M948.7,551.4L951.2,550.5M951.2,550.5L955.2,549.0M959.5,547.4L961.9,546.5M961.9,546.5L966.4,544.9M970.4,543.4L972.2,542.7M972.2,542.7L980.2,539.8M980.2,539.8L990.5,536.0M990.5,536.0L993.7,534.8M1001.0,532.1L1003.5,531.2M1003.5,531.2L1005.4,530.5M1013.8,527.4L1026.4,522.8" stroke="#000" stroke-width="3" fill="none"/><path d="M244.1,254.2h3.2v3.2h-3.2zM245.1,253.3h3.2v3.2h-3.2zM247.4,252.3h3.2v3.2h-3.2zM248.4,252.6h3.2v3.2h-3.2zM250.5,251.1h3.2v3.2h-3.2zM251.5,250.8h3.2v3.2h-3.2zM253.9,250.8h3.2v3.2h-3.2zM254.8,249.7h3.2v3.2h-3.2zM256.8,249.1h3.2v3.2h-3.2zM258.4,248.3h3.2v3.2h-3.2zM259.7,248.7h3.2v3.2h-3.2zM261.8,247.8h3.2v3.2h-3.2zM264.5,247.5h3.2v3.2h-3.2zM265.4,247.4h3.2v3.2h-3.2zM266.4,247.2h3.2v3.2h-3.2zM268.9,246.3h3.2v3.2h-3.2zM270.2,247.8h3.2v3.2h-3.2zM271.2,245.2h3.2v3.2h-3.2zM273.6,244.9h3.2v3.2h-3.2zM274.5,244.1h3.2v3.2h-3.2zM276.4,243.8h3.2v3.2h-3.2zM278.2,244.7h3.2v3.2h-3.2zM280.0,242.9h3.2v3.2h-3.2zM281.8,243.2h3.2v3.2h-3.2zM282.6,241.8h3.2v3.2h-3.2zM284.2,242.1h3.2v3.2h-3.2zM286.8,241.2h3.2v3.2h-3.2zM288.7,240.5h3.2v3.2h-3.2zM289.5,240.4h3.2v3.2h-3.2zM291.4,241.2h3.2v3.2h-3.2zM292.4,240.0h3.2v3.2h-3.2zM294.6,240.0h3.2v3.2h-3.2zM295.6,237.9h3.2v3.2h-3.2zM298.7,239.2h3.2v3.2h-3.2zM300.0,237.7h3.2v3.2h-3.2zM301.6,237.4h3.2v3.2h-3.2zM302.2,236.8h3.2v3.2h-3.2zM304.2,235.8h3.2v3.2h-3.2zM305.7,235.6h3.2v3.2h-3.2zM307.9,236.3h3.2v3.2h-3.2zM309.8,235.9h3.2v3.2h-3.2zM310.3,235.1h3.2v3.2h-3.2zM312.9,234.6h3.2v3.2h-3.2zM313.7,231.8h3.2v3.2h-3.2zM315.8,232.8h3.2v3.2h-3.2zM317.8,231.9h3.2v3.2h-3.2zM319.3,232.2h3.2v3.2h-3.2zM319.9,231.8h3.2v3.2h-3.2zM322.1,232.2h3.2v3.2h-3.2zM324.2,232.1h3.2v3.2h-3.2zM325.8,230.5h3.2v3.2h-3.2zM326.9,230.5h3.2v3.2h-3.2zM328.5,228.7h3.2v3.2h-3.2zM329.3,230.0h3.2v3.2h-3.2zM332.0,230.4h3.2v3.2h-3.2zM333.3,229.3h3.2v3.2h-3.2zM335.2,228.5h3.2v3.2h-3.2zM336.8,228.5h3.2v3.2h-3.2zM338.6,226.9h3.2v3.2h-3.2zM339.9,226.7h3.2v3.2h-3.2zM341.6,226.6h3.2v3.2h-3.2zM343.0,225.6h3.2v3.2h-3.2zM344.8,224.3h3.2v3.2h-3.2zM346.6,225.4h3.2v3.2h-3.2zM346.4,223.9h3.2v3.2h-3.2zM349.6,222.7h3.2v3.2h-3.2zM351.4,224.5h3.2v3.2h-3.2zM353.0,224.0h3.2v3.2h-3.2zM354.3,223.5h3.2v3.2h-3.2zM356.3,222.4h3.2v3.2h-3.2zM357.6,220.9h3.2v3.2h-3.2zM358.5,222.3h3.2v3.2h-3.2zM361.3,220.6h3.2v3.2h-3.2zM361.6,219.4h3.2v3.2h-3.2zM364.5,220.6h3.2v3.2h-3.2zM366.5,220.8h3.2v3.2h-3.2zM368.2,220.0h3.2v3.2h-3.2zM368.5,218.8h3.2v3.2h-3.2zM370.9,217.6h3.2v3.2h-3.2zM372.2,217.9h3.2v3.2h-3.2zM374.2,217.3h3.2v3.2h-3.2zM374.7,218.0h3.2v3.2h-3.2zM375.1,217.6h3.2v3.2h-3.2zM378.4,216.0h3.2v3.2h-3.2zM380.2,215.7h3.2v3.2h-3.2zM381.8,215.6h3.2v3.2h-3.2zM383.4,214.5h3.2v3.2h-3.2zM384.3,216.0h3.2v3.2h-3.2zM386.5,214.1h3.2v3.2h-3.2zM387.6,213.4h3.2v3.2h-3.2zM390.0,212.4h3.2v3.2h-3.2zM391.8,212.6h3.2v3.2h-3.2zM392.8,212.2h3.2v3.2h-3.2zM396.4,211.4h3.2v3.2h-3.2zM397.9,211.3h3.2v3.2h-3.2zM399.9,209.3h3.2v3.2h-3.2zM402.5,209.6h3.2v3.2h-3.2zM404.5,210.2h3.2v3.2h-3.2zM407.4,208.0h3.2v3.2h-3.2zM409.6,209.0h3.2v3.2h-3.2zM413.0,205.9h3.2v3.2h-3.2zM415.7,206.0h3.2v3.2h-3.2zM418.0,206.4h3.2v3.2h-3.2zM421.6,204.2h3.2v3.2h-3.2zM424.4,204.4h3.2v3.2h-3.2zM427.6,203.3h3.2v3.2h-3.2zM430.7,203.0h3.2v3.2h-3.2zM435.2,200.7h3.2v3.2h-3.2zM437.4,199.9h3.2v3.2h-3.2zM442.3,199.3h3.2v3.2h-3.2zM445.8,198.2h3.2v3.2h-3.2zM449.2,197.0h3.2v3.2h-3.2zM454.1,195.4h3.2v3.2h-3.2zM458.9,194.2h3.2v3.2h-3.2zM462.7,193.9h3.2v3.2h-3.2zM468.1,192.2h3.2v3.2h-3.2zM472.8,191.1h3.2v3.2h-3.2zM478.0,188.7h3.2v3.2h-3.2zM483.5,189.4h3.2v3.2h-3.2zM488.8,186.3h3.2v3.2h-3.2zM494.9,185.4h3.2v3.2h-3.2zM499.8,183.3h3.2v3.2h-3.2zM506.1,182.4h3.2v3.2h-3.2zM512.1,180.8h3.2v3.2h-3.2zM519.0,178.4h3.2v3.2h-3.2zM526.0,176.6h3.2v3.2h-3.2zM533.9,174.8h3.2v3.2h-3.2zM540.1,172.2h3.2v3.2h-3.2zM548.4,171.6h3.2v3.2h-3.2zM556.0,167.9h3.2v3.2h-3.2zM564.1,165.9h3.2v3.2h-3.2zM573.4,162.9h3.2v3.2h-3.2zM582.6,162.1h3.2v3.2h-3.2zM591.5,159.2h3.2v3.2h-3.2zM601.8,155.4h3.2v3.2h-3.2zM610.1,155.0h3.2v3.2h-3.2zM620.0,150.9h3.2v3.2h-3.2zM631.1,147.2h3.2v3.2h-3.2zM641.6,144.7h3.2v3.2h-3.2zM653.6,142.1h3.2v3.2h-3.2zM665.5,138.7h3.2v3.2h-3.2zM677.3,135.7h3.2v3.2h-3.2zM689.6,131.0h3.2v3.2h-3.2zM703.4,126.9h3.2v3.2h-3.2zM716.7,125.6h3.2v3.2h-3.2zM729.7,119.4h3.2v3.2h-3.2zM744.3,117.2h3.2v3.2h-3.2zM759.2,113.7h3.2v3.2h-3.2zM788.8,104.8h3.6v3.6h-3.6zM791.8,109.6h3.6v3.6h-3.6zM794.0,114.3h3.6v3.6h-3.6zM798.3,119.5h3.6v3.6h-3.6zM802.0,125.3h3.6v3.6h-3.6zM805.8,129.7h3.6v3.6h-3.6zM807.3,135.1h3.6v3.6h-3.6zM811.3,141.4h3.6v3.6h-3.6zM814.2,147.9h3.6v3.6h-3.6zM817.7,152.8h3.6v3.6h-3.6zM821.3,158.1h3.6v3.6h-3.6zM823.9,163.8h3.6v3.6h-3.6zM827.4,169.7h3.6v3.6h-3.6zM831.7,174.8h3.6v3.6h-3.6zM834.8,180.1h3.6v3.6h-3.6zM839.5,186.1h3.6v3.6h-3.6zM843.2,192.8h3.6v3.6h-3.6zM845.8,199.5h3.6v3.6h-3.6zM849.4,204.9h3.6v3.6h-3.6zM853.4,210.5h3.6v3.6h-3.6zM856.6,216.1h3.6v3.6h-3.6zM860.8,222.9h3.6v3.6h-3.6zM864.0,227.9h3.6v3.6h-3.6zM867.7,234.1h3.6v3.6h-3.6zM873.2,241.5h3.6v3.6h-3.6zM876.8,249.2h3.6v3.6h-3.6zM881.6,256.0h3.6v3.6h-3.6zM884.9,262.6h3.6v3.6h-3.6zM888.3,269.5h3.6v3.6h-3.6zM895.6,275.8h3.6v3.6h-3.6zM897.4,284.3h3.6v3.6h-3.6zM902.4,290.9h3.6v3.6h-3.6zM906.6,297.2h3.6v3.6h-3.6zM911.9,304.6h3.6v3.6h-3.6zM915.7,311.0h3.6v3.6h-3.6zM920.9,317.7h3.6v3.6h-3.6zM923.3,324.2h3.6v3.6h-3.6zM927.3,330.5h3.6v3.6h-3.6zM930.2,336.4h3.6v3.6h-3.6zM934.8,343.4h3.6v3.6h-3.6zM939.1,349.9h3.6v3.6h-3.6zM942.9,357.0h3.6v3.6h-3.6zM947.9,363.9h3.6v3.6h-3.6zM951.5,372.0h3.6v3.6h-3.6zM957.7,378.5h3.6v3.6h-3.6zM961.0,385.2h3.6v3.6h-3.6zM966.1,392.2h3.6v3.6h-3.6zM970.9,401.0h3.6v3.6h-3.6zM974.2,408.8h3.6v3.6h-3.6zM979.2,416.0h3.6v3.6h-3.6zM985.6,423.4h3.6v3.6h-3.6zM990.6,433.1h3.6v3.6h-3.6zM995.4,441.3h3.6v3.6h-3.6zM1000.5,449.7h3.6v3.6h-3.6zM1006.0,459.5h3.6v3.6h-3.6zM1011.3,467.8h3.6v3.6h-3.6zM1018.5,476.4h3.6v3.6h-3.6zM1023.0,485.8h3.6v3.6h-3.6zM1028.5,494.3h3.6v3.6h-3.6zM1034.3,502.3h3.6v3.6h-3.6zM1040.2,512.6h3.6v3.6h-3.6zM1045.1,522.5h3.6v3.6h-3.6zM1050.9,533.3h3.6v3.6h-3.6zM1058.4,540.8h3.6v3.6h-3.6zM1061.8,550.3h3.6v3.6h-3.6zM1067.8,557.5h3.6v3.6h-3.6zM1073.6,568.1h3.6v3.6h-3.6zM1078.3,576.0h3.6v3.6h-3.6zM526.5,421.8h3.6v3.6h-3.6zM524.5,421.6h3.6v3.6h-3.6zM523.3,423.1h3.6v3.6h-3.6zM520.2,422.7h3.6v3.6h-3.6zM518.4,422.3h3.6v3.6h-3.6zM517.8,422.6h3.6v3.6h-3.6zM515.4,425.0h3.6v3.6h-3.6zM514.0,423.3h3.6v3.6h-3.6zM511.9,425.0h3.6v3.6h-3.6zM509.8,427.3h3.6v3.6h-3.6zM508.5,426.3h3.6v3.6h-3.6zM507.2,426.9h3.6v3.6h-3.6zM504.3,427.4h3.6v3.6h-3.6zM503.4,428.1h3.6v3.6h-3.6zM501.9,429.2h3.6v3.6h-3.6zM499.9,428.9h3.6v3.6h-3.6zM497.9,431.2h3.6v3.6h-3.6zM495.3,431.1h3.6v3.6h-3.6zM494.5,430.2h3.6v3.6h-3.6zM492.5,431.8h3.6v3.6h-3.6zM490.1,432.0h3.6v3.6h-3.6zM489.3,431.7h3.6v3.6h-3.6zM487.3,434.1h3.6v3.6h-3.6zM485.5,432.9h3.6v3.6h-3.6zM482.9,432.7h3.6v3.6h-3.6zM482.4,434.5h3.6v3.6h-3.6zM480.0,435.1h3.6v3.6h-3.6zM477.9,437.2h3.6v3.6h-3.6zM476.9,437.6h3.6v3.6h-3.6zM474.1,437.4h3.6v3.6h-3.6zM473.3,436.6h3.6v3.6h-3.6zM470.7,437.4h3.6v3.6h-3.6zM469.9,438.8h3.6v3.6h-3.6zM467.2,439.8h3.6v3.6h-3.6zM465.5,439.9h3.6v3.6h-3.6zM464.0,439.7h3.6v3.6h-3.6zM462.7,441.0h3.6v3.6h-3.6zM459.3,441.3h3.6v3.6h-3.6zM459.4,440.3h3.6v3.6h-3.6zM457.3,442.8h3.6v3.6h-3.6zM454.4,443.2h3.6v3.6h-3.6zM452.7,442.6h3.6v3.6h-3.6zM451.6,444.5h3.6v3.6h-3.6zM448.7,444.5h3.6v3.6h-3.6zM447.8,444.2h3.6v3.6h-3.6zM446.5,445.5h3.6v3.6h-3.6zM444.4,447.1h3.6v3.6h-3.6zM441.9,447.5h3.6v3.6h-3.6zM440.6,448.1h3.6v3.6h-3.6zM438.6,449.1h3.6v3.6h-3.6zM437.3,450.1h3.6v3.6h-3.6zM435.7,448.4h3.6v3.6h-3.6zM433.1,450.4h3.6v3.6h-3.6zM432.0,450.1h3.6v3.6h-3.6zM429.7,451.4h3.6v3.6h-3.6zM427.8,452.6h3.6v3.6h-3.6zM425.6,452.7h3.6v3.6h-3.6zM423.9,453.3h3.6v3.6h-3.6zM422.0,453.3h3.6v3.6h-3.6zM421.1,453.3h3.6v3.6h-3.6zM418.8,455.1h3.6v3.6h-3.6zM416.9,455.0h3.6v3.6h-3.6zM415.1,455.1h3.6v3.6h-3.6zM413.7,456.9h3.6v3.6h-3.6zM412.3,457.2h3.6v3.6h-3.6zM410.2,457.1h3.6v3.6h-3.6zM408.1,457.4h3.6v3.6h-3.6zM406.1,458.4h3.6v3.6h-3.6zM404.6,457.7h3.6v3.6h-3.6zM402.2,459.6h3.6v3.6h-3.6zM400.8,459.9h3.6v3.6h-3.6zM398.4,462.0h3.6v3.6h-3.6zM396.5,461.3h3.6v3.6h-3.6zM395.5,460.5h3.6v3.6h-3.6zM393.3,463.0h3.6v3.6h-3.6zM391.4,461.9h3.6v3.6h-3.6zM388.8,463.3h3.6v3.6h-3.6zM387.2,465.0h3.6v3.6h-3.6zM385.6,466.2h3.6v3.6h-3.6zM383.9,466.1h3.6v3.6h-3.6zM381.8,465.8h3.6v3.6h-3.6zM380.4,467.5h3.6v3.6h-3.6zM378.1,468.4h3.6v3.6h-3.6zM376.4,469.2h3.6v3.6h-3.6zM374.0,468.3h3.6v3.6h-3.6zM373.0,469.2h3.6v3.6h-3.6zM370.3,470.4h3.6v3.6h-3.6zM368.9,470.3h3.6v3.6h-3.6zM366.5,471.0h3.6v3.6h-3.6zM363.4,473.0h3.6v3.6h-3.6zM361.0,472.4h3.6v3.6h-3.6zM359.1,472.9h3.6v3.6h-3.6zM355.5,474.3h3.6v3.6h-3.6zM353.2,476.1h3.6v3.6h-3.6zM350.1,475.8h3.6v3.6h-3.6zM346.4,477.1h3.6v3.6h-3.6zM343.6,479.2h3.6v3.6h-3.6zM339.6,478.0h3.6v3.6h-3.6zM335.9,480.4h3.6v3.6h-3.6zM333.3,483.0h3.6v3.6h-3.6zM328.4,483.1h3.6v3.6h-3.6zM324.9,485.5h3.6v3.6h-3.6zM321.1,486.8h3.6v3.6h-3.6zM316.4,487.8h3.6v3.6h-3.6zM311.9,488.0h3.6v3.6h-3.6zM307.3,489.8h3.6v3.6h-3.6zM300.6,491.6h3.6v3.6h-3.6zM295.8,493.8h3.6v3.6h-3.6zM291.5,495.4h3.6v3.6h-3.6zM285.1,496.0h3.6v3.6h-3.6zM278.3,498.5h3.6v3.6h-3.6zM273.2,500.6h3.6v3.6h-3.6zM265.6,501.7h3.6v3.6h-3.6zM258.2,505.4h3.6v3.6h-3.6zM251.0,507.5h3.6v3.6h-3.6zM243.5,510.5h3.6v3.6h-3.6zM234.5,511.7h3.6v3.6h-3.6zM226.9,516.0h3.6v3.6h-3.6zM217.0,518.8h3.6v3.6h-3.6zM207.6,521.1h3.6v3.6h-3.6zM199.1,523.0h3.6v3.6h-3.6zM188.1,527.4h3.6v3.6h-3.6zM176.8,531.6h3.6v3.6h-3.6zM165.5,534.0h3.6v3.6h-3.6zM153.5,538.7h3.6v3.6h-3.6zM141.9,543.3h3.6v3.6h-3.6zM128.4,545.8h3.6v3.6h-3.6zM115.5,550.3h3.6v3.6h-3.6zM100.6,556.6h3.6v3.6h-3.6zM85.5,558.7h3.6v3.6h-3.6zM68.7,564.5h3.6v3.6h-3.6zM52.9,569.8h3.6v3.6h-3.6zM35.2,576.2h3.6v3.6h-3.6zM16.4,581.9h3.6v3.6h-3.6zM-3.5,589.1h3.6v3.6h-3.6zM981.5,620.3h4v4h-4zM995.8,614.8h4v4h-4zM1010.0,609.3h4v4h-4zM1024.2,603.8h4v4h-4zM1038.3,598.4h4v4h-4zM1052.3,593.0h4v4h-4zM1066.2,587.6h4v4h-4z" fill="#ff0000"/><text x="225" y="400" font-family="Liberation Sans" font-size="44" fill="#ffffff">base_footprint</text><text x="719" y="483" font-family="Liberation Sans" font-size="47" fill="#ffffff">map</text><line x1="381" y1="362" x2="728" y2="483" stroke="#4a4620" stroke-width="6"/><line x1="381" y1="362" x2="728" y2="483" stroke="#c8c15a" stroke-width="4"/><polygon points="726.0,471.0 785.0,503.0 725.0,494.0" fill="#e0179a"/><ellipse cx="726" cy="482.5" rx="4" ry="11.5" fill="#ff33bb"/><polygon points="728.0,474.0 785.0,503.0 732.0,480.0" fill="#ff4dc4"/><polygon points="286.0,239.0 295.0,237.0 300.0,244.0 300.0,268.0 295.0,271.0 286.0,268.0" fill="#300000"/><rect x="286" y="238" width="9" height="29" fill="#dd0000"/><rect x="286" y="265" width="10" height="6" fill="#8a0000"/><ellipse cx="363" cy="360" rx="27" ry="19" fill="#7a0000"/><ellipse cx="361" cy="352" rx="27" ry="18" fill="#e60000"/><rect x="335" y="332" width="32" height="20" fill="#e60000"/><polygon points="302.0,256.0 384.0,326.0 384.0,350.0 302.0,281.0" fill="#d00000"/><polygon points="307.0,261.0 384.0,328.0 384.0,346.0 307.0,277.0" fill="#2a0000"/><line x1="358" y1="342" x2="331" y2="286" stroke="#000070" stroke-width="13"/><line x1="354" y1="342" x2="327" y2="287" stroke="#0000a0" stroke-width="5"/><polygon points="338.0,300.0 361.0,320.0 361.0,326.0 338.0,306.0" fill="#2a0000" opacity="0.85"/><ellipse cx="331" cy="285" rx="7.5" ry="6" fill="#0000ff"/><line x1="309" y1="286" x2="339" y2="344" stroke="#7a0000" stroke-width="1.8"/><line x1="338.0" y1="359" x2="245.0" y2="375" stroke="#a00000" stroke-width="10" stroke-linecap="butt"/><line x1="338.2" y1="360.0" x2="245.2" y2="376.0" stroke="#ff0000" stroke-width="7.2" stroke-linecap="butt"/><line x1="366.0" y1="374" x2="367.0" y2="455" stroke="#007a00" stroke-width="12" stroke-linecap="butt"/><line x1="364.8" y1="374.0" x2="365.8" y2="455.0" stroke="#00e000" stroke-width="8.4" stroke-linecap="butt"/><line x1="763.0" y1="440" x2="720.0" y2="347" stroke="#900000" stroke-width="9" stroke-linecap="butt"/><line x1="762.0" y1="440.5" x2="719.0" y2="347.5" stroke="#ff0000" stroke-width="6.5" stroke-linecap="butt"/><circle cx="721" cy="349" r="4.5" fill="#f00000"/><line x1="766.0" y1="440" x2="772.0" y2="371" stroke="#000060" stroke-width="13" stroke-linecap="butt"/><line x1="764.4" y1="439.9" x2="770.4" y2="370.9" stroke="#00009a" stroke-width="9.1" stroke-linecap="butt"/><ellipse cx="772" cy="373" rx="6.5" ry="5" fill="#0000ff"/><line x1="765.0" y1="442" x2="649.0" y2="477" stroke="#007000" stroke-width="11" stroke-linecap="butt"/><line x1="764.7" y1="441.2" x2="648.7" y2="476.2" stroke="#00ff00" stroke-width="8.8" stroke-linecap="butt"/></svg>
</body></html>
